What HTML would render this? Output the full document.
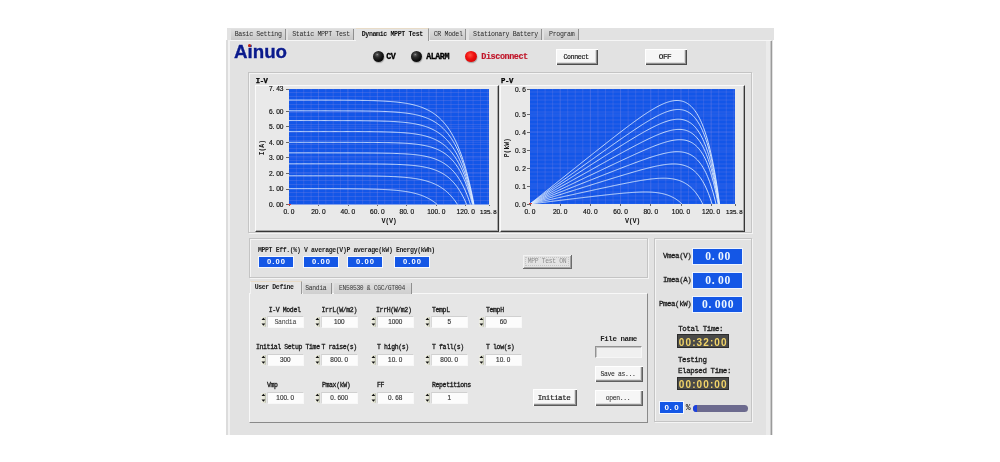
<!DOCTYPE html>
<html><head><meta charset="utf-8"><title>Ainuo Dynamic MPPT Test</title>
<style>
html,body{margin:0;padding:0;background:#fff;}
body{width:1000px;height:462px;position:relative;overflow:hidden;font-family:"Liberation Mono",monospace;}
#root{position:absolute;left:0;top:0;width:1000px;height:462px;overflow:hidden;filter:blur(0.45px);}
#root div{position:absolute;}
.n{font-family:"Liberation Sans",sans-serif !important;-webkit-text-stroke:0.18px currentColor;}
#root i{display:inline-block;font-style:normal;text-align:left;}
.t{white-space:nowrap;line-height:1.15;font-family:"Liberation Mono",monospace;}
.logo{font-family:"Liberation Sans",sans-serif;font-weight:bold;font-size:18px;color:#0b1b8c;-webkit-text-stroke:0.35px #0b1b8c;text-shadow:0 0 2px rgba(255,255,255,.9);line-height:1.15;letter-spacing:0px;white-space:nowrap;}
</style></head><body><div id="root">
<div class="" style="left:227px;top:28px;width:547px;height:12px;background:#e2e2e2;"></div>
<div class="" style="left:226px;top:40px;width:547px;height:395px;background:#e2e2e2;"></div>
<div class="" style="left:227px;top:40px;width:544px;height:1px;background:#f6f6f6;"></div>
<div class="" style="left:226px;top:40px;width:2px;height:395px;background:#dcdcdc;"></div>
<div class="" style="left:228px;top:40px;width:2px;height:395px;background:#f2f2f2;"></div>
<div class="" style="left:766px;top:41px;width:4px;height:394px;background:#ebebeb;"></div>
<div class="" style="left:770px;top:41px;width:1px;height:394px;background:#c8c8c8;"></div>
<div class="" style="left:771px;top:41px;width:1.2px;height:394px;background:#9a9a9a;"></div>
<div class="" style="left:230.5px;top:29px;width:55.30000000000001px;height:11px;background:linear-gradient(#dedede,#c8c8c8);border-right:1px solid #8f8f8f;box-sizing:border-box;"></div>
<div class="t" style="left:230.50px;top:31.34px;font-size:6.60px;letter-spacing:-0.360px;width:55.30000000000001px;text-align:center;color:#2c2c2c;">Basic Setting</div>
<div class="" style="left:288px;top:29px;width:66px;height:11px;background:linear-gradient(#dedede,#c8c8c8);border-right:1px solid #8f8f8f;box-sizing:border-box;"></div>
<div class="t" style="left:288.00px;top:31.34px;font-size:6.60px;letter-spacing:-0.360px;width:66px;text-align:center;color:#2c2c2c;">Static MPPT Test</div>
<div class="" style="left:356px;top:28px;width:72.60000000000002px;height:13px;background:#e2e2e2;border-top:1px solid #e9dcc8;border-right:1px solid #9a9a9a;box-sizing:border-box;"></div>
<div class="t" style="left:356.00px;top:30.64px;font-size:6.60px;letter-spacing:-0.360px;width:72.60000000000002px;text-align:center;color:#111;font-weight:bold;">Dynamic MPPT Test</div>
<div class="" style="left:430px;top:29px;width:36.30000000000001px;height:11px;background:linear-gradient(#dedede,#c8c8c8);border-right:1px solid #8f8f8f;box-sizing:border-box;"></div>
<div class="t" style="left:430.00px;top:31.34px;font-size:6.60px;letter-spacing:-0.360px;width:36.30000000000001px;text-align:center;color:#2c2c2c;">CR Model</div>
<div class="" style="left:468.6px;top:29px;width:73.79999999999995px;height:11px;background:linear-gradient(#dedede,#c8c8c8);border-right:1px solid #8f8f8f;box-sizing:border-box;"></div>
<div class="t" style="left:468.60px;top:31.34px;font-size:6.60px;letter-spacing:-0.360px;width:73.79999999999995px;text-align:center;color:#2c2c2c;">Stationary Battery</div>
<div class="" style="left:544px;top:29px;width:35.39999999999998px;height:11px;background:linear-gradient(#dedede,#c8c8c8);border-right:1px solid #8f8f8f;box-sizing:border-box;"></div>
<div class="t" style="left:544.00px;top:31.34px;font-size:6.60px;letter-spacing:-0.360px;width:35.39999999999998px;text-align:center;color:#2c2c2c;">Program</div>
<div class="logo" style="left:234px;top:42.2px;transform-origin:0 0;transform:scaleX(1.04);">Ainuo</div>
<div class="" style="left:248.3px;top:44.2px;width:3.2px;height:3.2px;background:#d02a10;border-radius:50%;"></div>
<div class="" style="left:373px;top:51px;width:11px;height:11px;border-radius:50%;background:radial-gradient(circle at 38% 33%, #b0b0b0 0%, #5a5a5a 9%, #2e2e2e 26%, #0c0c0c 62%);box-shadow:0.5px 1px 1px rgba(120,120,120,.6);"></div>
<div class="" style="left:411px;top:51px;width:11px;height:11px;border-radius:50%;background:radial-gradient(circle at 38% 33%, #b0b0b0 0%, #5a5a5a 9%, #2e2e2e 26%, #0c0c0c 62%);box-shadow:0.5px 1px 1px rgba(120,120,120,.6);"></div>
<div class="" style="left:465px;top:51px;width:12px;height:11px;border-radius:50%;background:radial-gradient(circle at 42% 38%, #ff5040 0%, #f01010 40%, #d80808 70%, #a01010 100%);box-shadow:0.5px 1px 1px rgba(120,120,120,.6);"></div>
<div class="t" style="left:386.20px;top:52.54px;font-size:8.36px;letter-spacing:-0.456px;font-weight:bold;color:#000;-webkit-text-stroke:0.3px #000;">CV</div>
<div class="t" style="left:426.20px;top:52.54px;font-size:8.36px;letter-spacing:-0.456px;font-weight:bold;color:#000;-webkit-text-stroke:0.3px #000;">ALARM</div>
<div class="t" style="left:481.30px;top:52.83px;font-size:8.53px;letter-spacing:-0.465px;font-weight:bold;color:#c0162a;-webkit-text-stroke:0.15px #c0162a;">Disconnect</div>
<div class="" style="left:556px;top:49px;width:42px;height:16px;background:#f6f6f6;border-top:1px solid #fff;border-left:1px solid #fff;box-sizing:border-box;"></div>
<div class="" style="left:595px;top:50px;width:1px;height:13px;background:#dcdcdc;"></div>
<div class="" style="left:557px;top:62px;width:39px;height:1px;background:#dcdcdc;"></div>
<div class="" style="left:596px;top:50px;width:1px;height:14px;background:#909090;"></div>
<div class="" style="left:557px;top:63px;width:40px;height:1px;background:#909090;"></div>
<div class="" style="left:597px;top:50px;width:1px;height:15px;background:#4c4c4c;"></div>
<div class="" style="left:557px;top:64px;width:41px;height:1px;background:#4c4c4c;"></div>
<div class="t" style="left:556.00px;top:53.89px;font-size:6.60px;letter-spacing:-0.360px;width:40px;text-align:center;color:#1a1a1a;-webkit-text-stroke:0.2px #1a1a1a;">Connect</div>
<div class="" style="left:645px;top:49px;width:42px;height:16px;background:#f6f6f6;border-top:1px solid #fff;border-left:1px solid #fff;box-sizing:border-box;"></div>
<div class="" style="left:684px;top:50px;width:1px;height:13px;background:#dcdcdc;"></div>
<div class="" style="left:646px;top:62px;width:39px;height:1px;background:#dcdcdc;"></div>
<div class="" style="left:685px;top:50px;width:1px;height:14px;background:#909090;"></div>
<div class="" style="left:646px;top:63px;width:40px;height:1px;background:#909090;"></div>
<div class="" style="left:686px;top:50px;width:1px;height:15px;background:#4c4c4c;"></div>
<div class="" style="left:646px;top:64px;width:41px;height:1px;background:#4c4c4c;"></div>
<div class="t" style="left:645.00px;top:53.26px;font-size:7.70px;letter-spacing:-0.420px;width:40px;text-align:center;color:#1a1a1a;-webkit-text-stroke:0.2px #1a1a1a;">OFF</div>
<div class="" style="left:248px;top:72px;width:504px;height:161px;background:#e2e2e2;border:1px solid #c4c4c4;box-shadow:inset 1px 1px 0 #f4f4f4, 1px 1px 0 #f4f4f4;box-sizing:border-box;"></div>
<div class="" style="left:255px;top:85px;width:244px;height:147px;background:#e9e9e9;border-top:1px solid #fafafa;border-left:1px solid #fafafa;border-right:1px solid #363636;border-bottom:1px solid #363636;box-shadow:inset -1px -1px 0 #a8a8a8;box-sizing:border-box;"></div>
<div class="" style="left:500px;top:85px;width:245px;height:147px;background:#e9e9e9;border-top:1px solid #fafafa;border-left:1px solid #fafafa;border-right:1px solid #363636;border-bottom:1px solid #363636;box-shadow:inset -1px -1px 0 #a8a8a8;box-sizing:border-box;"></div>
<div class="t" style="left:255.70px;top:76.90px;font-size:7.26px;letter-spacing:-0.396px;font-weight:bold;color:#000;-webkit-text-stroke:0.25px #000;">I-V</div>
<div class="t" style="left:501.00px;top:76.90px;font-size:7.26px;letter-spacing:-0.396px;font-weight:bold;color:#000;-webkit-text-stroke:0.25px #000;">P-V</div>
<svg style="position:absolute;left:289px;top:89px" width="200" height="115.5" viewBox="0 0 200 115.5"><rect width="200" height="115.5" fill="#1356e8"/><line x1="7.36" y1="0" x2="7.36" y2="115.5" stroke="#8c8ce0" stroke-opacity="0.34" stroke-width="0.7"/><line x1="14.73" y1="0" x2="14.73" y2="115.5" stroke="#8c8ce0" stroke-opacity="0.34" stroke-width="0.7"/><line x1="22.09" y1="0" x2="22.09" y2="115.5" stroke="#8c8ce0" stroke-opacity="0.34" stroke-width="0.7"/><line x1="29.46" y1="0" x2="29.46" y2="115.5" stroke="#8c8ce0" stroke-opacity="0.5" stroke-width="0.7"/><line x1="36.82" y1="0" x2="36.82" y2="115.5" stroke="#8c8ce0" stroke-opacity="0.34" stroke-width="0.7"/><line x1="44.18" y1="0" x2="44.18" y2="115.5" stroke="#8c8ce0" stroke-opacity="0.34" stroke-width="0.7"/><line x1="51.55" y1="0" x2="51.55" y2="115.5" stroke="#8c8ce0" stroke-opacity="0.34" stroke-width="0.7"/><line x1="58.91" y1="0" x2="58.91" y2="115.5" stroke="#8c8ce0" stroke-opacity="0.5" stroke-width="0.7"/><line x1="66.27" y1="0" x2="66.27" y2="115.5" stroke="#8c8ce0" stroke-opacity="0.34" stroke-width="0.7"/><line x1="73.64" y1="0" x2="73.64" y2="115.5" stroke="#8c8ce0" stroke-opacity="0.34" stroke-width="0.7"/><line x1="81.00" y1="0" x2="81.00" y2="115.5" stroke="#8c8ce0" stroke-opacity="0.34" stroke-width="0.7"/><line x1="88.37" y1="0" x2="88.37" y2="115.5" stroke="#8c8ce0" stroke-opacity="0.5" stroke-width="0.7"/><line x1="95.73" y1="0" x2="95.73" y2="115.5" stroke="#8c8ce0" stroke-opacity="0.34" stroke-width="0.7"/><line x1="103.09" y1="0" x2="103.09" y2="115.5" stroke="#8c8ce0" stroke-opacity="0.34" stroke-width="0.7"/><line x1="110.46" y1="0" x2="110.46" y2="115.5" stroke="#8c8ce0" stroke-opacity="0.34" stroke-width="0.7"/><line x1="117.82" y1="0" x2="117.82" y2="115.5" stroke="#8c8ce0" stroke-opacity="0.5" stroke-width="0.7"/><line x1="125.18" y1="0" x2="125.18" y2="115.5" stroke="#8c8ce0" stroke-opacity="0.34" stroke-width="0.7"/><line x1="132.55" y1="0" x2="132.55" y2="115.5" stroke="#8c8ce0" stroke-opacity="0.34" stroke-width="0.7"/><line x1="139.91" y1="0" x2="139.91" y2="115.5" stroke="#8c8ce0" stroke-opacity="0.34" stroke-width="0.7"/><line x1="147.28" y1="0" x2="147.28" y2="115.5" stroke="#8c8ce0" stroke-opacity="0.5" stroke-width="0.7"/><line x1="154.64" y1="0" x2="154.64" y2="115.5" stroke="#8c8ce0" stroke-opacity="0.34" stroke-width="0.7"/><line x1="162.00" y1="0" x2="162.00" y2="115.5" stroke="#8c8ce0" stroke-opacity="0.34" stroke-width="0.7"/><line x1="169.37" y1="0" x2="169.37" y2="115.5" stroke="#8c8ce0" stroke-opacity="0.34" stroke-width="0.7"/><line x1="176.73" y1="0" x2="176.73" y2="115.5" stroke="#8c8ce0" stroke-opacity="0.5" stroke-width="0.7"/><line x1="184.09" y1="0" x2="184.09" y2="115.5" stroke="#8c8ce0" stroke-opacity="0.34" stroke-width="0.7"/><line x1="191.46" y1="0" x2="191.46" y2="115.5" stroke="#8c8ce0" stroke-opacity="0.34" stroke-width="0.7"/><line x1="198.82" y1="0" x2="198.82" y2="115.5" stroke="#8c8ce0" stroke-opacity="0.34" stroke-width="0.7"/><line x1="0" y1="111.50" x2="200" y2="111.50" stroke="#8c8ce0" stroke-opacity="0.36" stroke-width="0.7"/><line x1="0" y1="107.50" x2="200" y2="107.50" stroke="#8c8ce0" stroke-opacity="0.36" stroke-width="0.7"/><line x1="0" y1="103.50" x2="200" y2="103.50" stroke="#8c8ce0" stroke-opacity="0.36" stroke-width="0.7"/><line x1="0" y1="99.50" x2="200" y2="99.50" stroke="#8c8ce0" stroke-opacity="0.36" stroke-width="0.7"/><line x1="0" y1="95.50" x2="200" y2="95.50" stroke="#8c8ce0" stroke-opacity="0.36" stroke-width="0.7"/><line x1="0" y1="91.50" x2="200" y2="91.50" stroke="#8c8ce0" stroke-opacity="0.36" stroke-width="0.7"/><line x1="0" y1="87.50" x2="200" y2="87.50" stroke="#8c8ce0" stroke-opacity="0.36" stroke-width="0.7"/><line x1="0" y1="83.50" x2="200" y2="83.50" stroke="#8c8ce0" stroke-opacity="0.36" stroke-width="0.7"/><line x1="0" y1="79.50" x2="200" y2="79.50" stroke="#8c8ce0" stroke-opacity="0.36" stroke-width="0.7"/><line x1="0" y1="75.50" x2="200" y2="75.50" stroke="#8c8ce0" stroke-opacity="0.36" stroke-width="0.7"/><line x1="0" y1="71.50" x2="200" y2="71.50" stroke="#8c8ce0" stroke-opacity="0.36" stroke-width="0.7"/><line x1="0" y1="67.50" x2="200" y2="67.50" stroke="#8c8ce0" stroke-opacity="0.36" stroke-width="0.7"/><line x1="0" y1="63.50" x2="200" y2="63.50" stroke="#8c8ce0" stroke-opacity="0.36" stroke-width="0.7"/><line x1="0" y1="59.50" x2="200" y2="59.50" stroke="#8c8ce0" stroke-opacity="0.36" stroke-width="0.7"/><line x1="0" y1="55.50" x2="200" y2="55.50" stroke="#8c8ce0" stroke-opacity="0.36" stroke-width="0.7"/><line x1="0" y1="51.50" x2="200" y2="51.50" stroke="#8c8ce0" stroke-opacity="0.36" stroke-width="0.7"/><line x1="0" y1="47.50" x2="200" y2="47.50" stroke="#8c8ce0" stroke-opacity="0.36" stroke-width="0.7"/><line x1="0" y1="43.50" x2="200" y2="43.50" stroke="#8c8ce0" stroke-opacity="0.36" stroke-width="0.7"/><line x1="0" y1="39.50" x2="200" y2="39.50" stroke="#8c8ce0" stroke-opacity="0.36" stroke-width="0.7"/><line x1="0" y1="35.50" x2="200" y2="35.50" stroke="#8c8ce0" stroke-opacity="0.36" stroke-width="0.7"/><line x1="0" y1="31.50" x2="200" y2="31.50" stroke="#8c8ce0" stroke-opacity="0.36" stroke-width="0.7"/><line x1="0" y1="27.50" x2="200" y2="27.50" stroke="#8c8ce0" stroke-opacity="0.36" stroke-width="0.7"/><line x1="0" y1="23.50" x2="200" y2="23.50" stroke="#8c8ce0" stroke-opacity="0.36" stroke-width="0.7"/><line x1="0" y1="19.50" x2="200" y2="19.50" stroke="#8c8ce0" stroke-opacity="0.36" stroke-width="0.7"/><line x1="0" y1="15.50" x2="200" y2="15.50" stroke="#8c8ce0" stroke-opacity="0.36" stroke-width="0.7"/><line x1="0" y1="11.50" x2="200" y2="11.50" stroke="#8c8ce0" stroke-opacity="0.36" stroke-width="0.7"/><line x1="0" y1="7.50" x2="200" y2="7.50" stroke="#8c8ce0" stroke-opacity="0.36" stroke-width="0.7"/><line x1="0" y1="3.50" x2="200" y2="3.50" stroke="#8c8ce0" stroke-opacity="0.36" stroke-width="0.7"/><line x1="0" y1="115.50" x2="200" y2="115.50" stroke="#b9b0ff" stroke-opacity="0.2" stroke-width="0.7"/><line x1="0" y1="99.95" x2="200" y2="99.95" stroke="#b9b0ff" stroke-opacity="0.2" stroke-width="0.7"/><line x1="0" y1="84.41" x2="200" y2="84.41" stroke="#b9b0ff" stroke-opacity="0.2" stroke-width="0.7"/><line x1="0" y1="68.86" x2="200" y2="68.86" stroke="#b9b0ff" stroke-opacity="0.2" stroke-width="0.7"/><line x1="0" y1="53.32" x2="200" y2="53.32" stroke="#b9b0ff" stroke-opacity="0.2" stroke-width="0.7"/><line x1="0" y1="37.77" x2="200" y2="37.77" stroke="#b9b0ff" stroke-opacity="0.2" stroke-width="0.7"/><line x1="0" y1="22.23" x2="200" y2="22.23" stroke="#b9b0ff" stroke-opacity="0.2" stroke-width="0.7"/><line x1="0" y1="0.00" x2="200" y2="0.00" stroke="#b9b0ff" stroke-opacity="0.2" stroke-width="0.7"/><path d="M0.00,11.04 L0.92,11.04 L1.85,11.04 L2.77,11.04 L3.70,11.04 L4.62,11.04 L5.55,11.04 L6.47,11.04 L7.40,11.04 L8.32,11.04 L9.25,11.04 L10.17,11.04 L11.10,11.04 L12.02,11.04 L12.95,11.04 L13.87,11.05 L14.80,11.05 L15.72,11.05 L16.65,11.05 L17.57,11.05 L18.50,11.05 L19.42,11.05 L20.35,11.05 L21.27,11.05 L22.20,11.05 L23.12,11.06 L24.05,11.06 L24.97,11.06 L25.90,11.06 L26.82,11.06 L27.75,11.06 L28.67,11.06 L29.60,11.07 L30.52,11.07 L31.45,11.07 L32.37,11.07 L33.30,11.07 L34.22,11.08 L35.15,11.08 L36.07,11.08 L37.00,11.08 L37.92,11.09 L38.85,11.09 L39.77,11.09 L40.70,11.10 L41.62,11.10 L42.54,11.10 L43.47,11.11 L44.39,11.11 L45.32,11.11 L46.24,11.12 L47.17,11.12 L48.09,11.13 L49.02,11.13 L49.94,11.14 L50.87,11.14 L51.79,11.15 L52.72,11.15 L53.64,11.16 L54.57,11.16 L55.49,11.17 L56.42,11.18 L57.34,11.19 L58.27,11.19 L59.19,11.20 L60.12,11.21 L61.04,11.22 L61.97,11.23 L62.89,11.24 L63.82,11.25 L64.74,11.26 L65.67,11.27 L66.59,11.28 L67.52,11.29 L68.44,11.30 L69.37,11.32 L70.29,11.33 L71.22,11.35 L72.14,11.36 L73.07,11.38 L73.99,11.39 L74.92,11.41 L75.84,11.43 L76.77,11.45 L77.69,11.47 L78.62,11.49 L79.54,11.51 L80.47,11.54 L81.39,11.56 L82.32,11.59 L83.24,11.61 L84.16,11.64 L85.09,11.67 L86.01,11.70 L86.94,11.74 L87.86,11.77 L88.79,11.81 L89.71,11.84 L90.64,11.88 L91.56,11.92 L92.49,11.97 L93.41,12.01 L94.34,12.06 L95.26,12.11 L96.19,12.16 L97.11,12.22 L98.04,12.27 L98.96,12.33 L99.89,12.40 L100.81,12.46 L101.74,12.53 L102.66,12.61 L103.59,12.68 L104.51,12.76 L105.44,12.85 L106.36,12.93 L107.29,13.02 L108.21,13.12 L109.14,13.22 L110.06,13.33 L110.99,13.44 L111.91,13.56 L112.84,13.68 L113.76,13.80 L114.69,13.94 L115.61,14.08 L116.54,14.23 L117.46,14.38 L118.39,14.54 L119.31,14.71 L120.24,14.89 L121.16,15.08 L122.09,15.27 L123.01,15.48 L123.94,15.69 L124.86,15.91 L125.78,16.15 L126.71,16.40 L127.63,16.66 L128.56,16.93 L129.48,17.21 L130.41,17.51 L131.33,17.82 L132.26,18.15 L133.18,18.50 L134.11,18.86 L135.03,19.23 L135.96,19.63 L136.88,20.04 L137.81,20.48 L138.73,20.93 L139.66,21.41 L140.58,21.91 L141.51,22.44 L142.43,22.99 L143.36,23.57 L144.28,24.17 L145.21,24.81 L146.13,25.47 L147.06,26.17 L147.98,26.90 L148.91,27.66 L149.83,28.46 L150.76,29.31 L151.68,30.19 L152.61,31.11 L153.53,32.08 L154.46,33.10 L155.38,34.16 L156.31,35.28 L157.23,36.45 L158.16,37.67 L159.08,38.96 L160.01,40.31 L160.93,41.72 L161.86,43.20 L162.78,44.75 L163.71,46.38 L164.63,48.08 L165.56,49.87 L166.48,51.74 L167.41,53.71 L168.33,55.77 L169.25,57.93 L170.18,60.19 L171.10,62.56 L172.03,65.05 L172.95,67.65 L173.88,70.38 L174.80,73.25 L175.73,76.25 L176.65,79.39 L177.58,82.69 L178.50,86.15 L179.43,89.77 L180.35,93.57 L181.28,97.56 L182.20,101.73 L183.13,106.11 L184.05,110.69 L184.98,115.50" fill="none" stroke="#e2f0ff" stroke-width="0.95" stroke-opacity="0.9"/><path d="M0.00,21.76 L0.92,21.76 L1.85,21.76 L2.77,21.76 L3.69,21.76 L4.62,21.76 L5.54,21.76 L6.46,21.76 L7.39,21.77 L8.31,21.77 L9.23,21.77 L10.16,21.77 L11.08,21.77 L12.00,21.77 L12.93,21.77 L13.85,21.77 L14.77,21.77 L15.70,21.77 L16.62,21.77 L17.54,21.77 L18.47,21.77 L19.39,21.77 L20.32,21.77 L21.24,21.77 L22.16,21.77 L23.09,21.77 L24.01,21.77 L24.93,21.77 L25.86,21.78 L26.78,21.78 L27.70,21.78 L28.63,21.78 L29.55,21.78 L30.47,21.78 L31.40,21.78 L32.32,21.78 L33.24,21.78 L34.17,21.78 L35.09,21.79 L36.01,21.79 L36.94,21.79 L37.86,21.79 L38.78,21.79 L39.71,21.79 L40.63,21.80 L41.55,21.80 L42.48,21.80 L43.40,21.80 L44.32,21.80 L45.25,21.81 L46.17,21.81 L47.09,21.81 L48.02,21.81 L48.94,21.82 L49.86,21.82 L50.79,21.82 L51.71,21.83 L52.63,21.83 L53.56,21.83 L54.48,21.84 L55.41,21.84 L56.33,21.84 L57.25,21.85 L58.18,21.85 L59.10,21.86 L60.02,21.86 L60.95,21.87 L61.87,21.87 L62.79,21.88 L63.72,21.89 L64.64,21.89 L65.56,21.90 L66.49,21.91 L67.41,21.91 L68.33,21.92 L69.26,21.93 L70.18,21.94 L71.10,21.95 L72.03,21.96 L72.95,21.97 L73.87,21.98 L74.80,21.99 L75.72,22.00 L76.64,22.02 L77.57,22.03 L78.49,22.04 L79.41,22.06 L80.34,22.07 L81.26,22.09 L82.18,22.11 L83.11,22.13 L84.03,22.14 L84.95,22.16 L85.88,22.19 L86.80,22.21 L87.72,22.23 L88.65,22.25 L89.57,22.28 L90.49,22.31 L91.42,22.34 L92.34,22.37 L93.27,22.40 L94.19,22.43 L95.11,22.46 L96.04,22.50 L96.96,22.54 L97.88,22.58 L98.81,22.62 L99.73,22.67 L100.65,22.71 L101.58,22.76 L102.50,22.81 L103.42,22.87 L104.35,22.93 L105.27,22.99 L106.19,23.05 L107.12,23.12 L108.04,23.19 L108.96,23.26 L109.89,23.34 L110.81,23.42 L111.73,23.51 L112.66,23.60 L113.58,23.69 L114.50,23.79 L115.43,23.90 L116.35,24.01 L117.27,24.12 L118.20,24.25 L119.12,24.37 L120.04,24.51 L120.97,24.65 L121.89,24.80 L122.81,24.96 L123.74,25.12 L124.66,25.30 L125.58,25.48 L126.51,25.67 L127.43,25.88 L128.35,26.09 L129.28,26.31 L130.20,26.55 L131.13,26.80 L132.05,27.06 L132.97,27.33 L133.90,27.62 L134.82,27.92 L135.74,28.24 L136.67,28.57 L137.59,28.93 L138.51,29.30 L139.44,29.69 L140.36,30.10 L141.28,30.53 L142.21,30.98 L143.13,31.46 L144.05,31.96 L144.98,32.49 L145.90,33.04 L146.82,33.62 L147.75,34.24 L148.67,34.88 L149.59,35.56 L150.52,36.28 L151.44,37.03 L152.36,37.82 L153.29,38.65 L154.21,39.52 L155.13,40.44 L156.06,41.40 L156.98,42.42 L157.90,43.49 L158.83,44.61 L159.75,45.79 L160.67,47.03 L161.60,48.34 L162.52,49.72 L163.44,51.16 L164.37,52.68 L165.29,54.28 L166.22,55.96 L167.14,57.73 L168.06,59.59 L168.99,61.55 L169.91,63.60 L170.83,65.77 L171.76,68.04 L172.68,70.43 L173.60,72.95 L174.53,75.60 L175.45,78.38 L176.37,81.31 L177.30,84.39 L178.22,87.63 L179.14,91.03 L180.07,94.61 L180.99,98.38 L181.91,102.34 L182.84,106.51 L183.76,110.89 L184.68,115.50" fill="none" stroke="#e2f0ff" stroke-width="0.95" stroke-opacity="0.9"/><path d="M0.00,31.56 L0.92,31.56 L1.84,31.56 L2.77,31.56 L3.69,31.56 L4.61,31.56 L5.53,31.56 L6.45,31.56 L7.38,31.56 L8.30,31.56 L9.22,31.56 L10.14,31.56 L11.06,31.56 L11.99,31.56 L12.91,31.56 L13.83,31.56 L14.75,31.56 L15.67,31.56 L16.59,31.56 L17.52,31.56 L18.44,31.56 L19.36,31.56 L20.28,31.56 L21.20,31.56 L22.13,31.56 L23.05,31.56 L23.97,31.57 L24.89,31.57 L25.81,31.57 L26.74,31.57 L27.66,31.57 L28.58,31.57 L29.50,31.57 L30.42,31.57 L31.35,31.57 L32.27,31.57 L33.19,31.57 L34.11,31.57 L35.03,31.58 L35.96,31.58 L36.88,31.58 L37.80,31.58 L38.72,31.58 L39.64,31.58 L40.57,31.58 L41.49,31.58 L42.41,31.59 L43.33,31.59 L44.25,31.59 L45.18,31.59 L46.10,31.59 L47.02,31.60 L47.94,31.60 L48.86,31.60 L49.78,31.60 L50.71,31.61 L51.63,31.61 L52.55,31.61 L53.47,31.61 L54.39,31.62 L55.32,31.62 L56.24,31.62 L57.16,31.63 L58.08,31.63 L59.00,31.64 L59.93,31.64 L60.85,31.64 L61.77,31.65 L62.69,31.65 L63.61,31.66 L64.54,31.66 L65.46,31.67 L66.38,31.68 L67.30,31.68 L68.22,31.69 L69.15,31.70 L70.07,31.70 L70.99,31.71 L71.91,31.72 L72.83,31.73 L73.76,31.74 L74.68,31.75 L75.60,31.76 L76.52,31.77 L77.44,31.78 L78.37,31.79 L79.29,31.80 L80.21,31.82 L81.13,31.83 L82.05,31.85 L82.97,31.86 L83.90,31.88 L84.82,31.89 L85.74,31.91 L86.66,31.93 L87.58,31.95 L88.51,31.97 L89.43,31.99 L90.35,32.02 L91.27,32.04 L92.19,32.07 L93.12,32.09 L94.04,32.12 L94.96,32.15 L95.88,32.18 L96.80,32.21 L97.73,32.25 L98.65,32.29 L99.57,32.32 L100.49,32.36 L101.41,32.41 L102.34,32.45 L103.26,32.50 L104.18,32.55 L105.10,32.60 L106.02,32.65 L106.95,32.71 L107.87,32.77 L108.79,32.84 L109.71,32.90 L110.63,32.97 L111.56,33.05 L112.48,33.13 L113.40,33.21 L114.32,33.30 L115.24,33.39 L116.16,33.48 L117.09,33.58 L118.01,33.69 L118.93,33.80 L119.85,33.92 L120.77,34.04 L121.70,34.17 L122.62,34.31 L123.54,34.45 L124.46,34.61 L125.38,34.77 L126.31,34.93 L127.23,35.11 L128.15,35.30 L129.07,35.49 L129.99,35.70 L130.92,35.92 L131.84,36.14 L132.76,36.38 L133.68,36.64 L134.60,36.90 L135.53,37.18 L136.45,37.48 L137.37,37.79 L138.29,38.11 L139.21,38.46 L140.14,38.82 L141.06,39.20 L141.98,39.60 L142.90,40.02 L143.82,40.46 L144.75,40.93 L145.67,41.42 L146.59,41.93 L147.51,42.48 L148.43,43.05 L149.35,43.65 L150.28,44.28 L151.20,44.95 L152.12,45.65 L153.04,46.38 L153.96,47.16 L154.89,47.98 L155.81,48.83 L156.73,49.74 L157.65,50.69 L158.57,51.69 L159.50,52.74 L160.42,53.85 L161.34,55.02 L162.26,56.25 L163.18,57.54 L164.11,58.90 L165.03,60.33 L165.95,61.83 L166.87,63.42 L167.79,65.08 L168.72,66.84 L169.64,68.68 L170.56,70.63 L171.48,72.67 L172.40,74.82 L173.33,77.08 L174.25,79.46 L175.17,81.97 L176.09,84.61 L177.01,87.38 L177.94,90.30 L178.86,93.38 L179.78,96.61 L180.70,100.01 L181.62,103.59 L182.54,107.36 L183.47,111.33 L184.39,115.50" fill="none" stroke="#e2f0ff" stroke-width="0.95" stroke-opacity="0.9"/><path d="M0.00,42.44 L0.92,42.44 L1.84,42.44 L2.76,42.44 L3.68,42.44 L4.60,42.44 L5.52,42.44 L6.44,42.44 L7.36,42.44 L8.28,42.44 L9.20,42.44 L10.13,42.44 L11.05,42.44 L11.97,42.44 L12.89,42.44 L13.81,42.44 L14.73,42.44 L15.65,42.44 L16.57,42.44 L17.49,42.44 L18.41,42.44 L19.33,42.44 L20.25,42.44 L21.17,42.44 L22.09,42.44 L23.01,42.44 L23.93,42.44 L24.85,42.44 L25.77,42.44 L26.69,42.44 L27.61,42.44 L28.53,42.45 L29.46,42.45 L30.38,42.45 L31.30,42.45 L32.22,42.45 L33.14,42.45 L34.06,42.45 L34.98,42.45 L35.90,42.45 L36.82,42.45 L37.74,42.45 L38.66,42.45 L39.58,42.45 L40.50,42.45 L41.42,42.45 L42.34,42.46 L43.26,42.46 L44.18,42.46 L45.10,42.46 L46.02,42.46 L46.94,42.46 L47.86,42.46 L48.78,42.46 L49.71,42.47 L50.63,42.47 L51.55,42.47 L52.47,42.47 L53.39,42.47 L54.31,42.48 L55.23,42.48 L56.15,42.48 L57.07,42.48 L57.99,42.48 L58.91,42.49 L59.83,42.49 L60.75,42.49 L61.67,42.50 L62.59,42.50 L63.51,42.50 L64.43,42.51 L65.35,42.51 L66.27,42.51 L67.19,42.52 L68.11,42.52 L69.04,42.53 L69.96,42.53 L70.88,42.54 L71.80,42.54 L72.72,42.55 L73.64,42.56 L74.56,42.56 L75.48,42.57 L76.40,42.58 L77.32,42.58 L78.24,42.59 L79.16,42.60 L80.08,42.61 L81.00,42.62 L81.92,42.63 L82.84,42.64 L83.76,42.65 L84.68,42.66 L85.60,42.68 L86.52,42.69 L87.44,42.70 L88.37,42.72 L89.29,42.73 L90.21,42.75 L91.13,42.77 L92.05,42.79 L92.97,42.80 L93.89,42.83 L94.81,42.85 L95.73,42.87 L96.65,42.89 L97.57,42.92 L98.49,42.94 L99.41,42.97 L100.33,43.00 L101.25,43.03 L102.17,43.07 L103.09,43.10 L104.01,43.14 L104.93,43.17 L105.85,43.21 L106.77,43.26 L107.70,43.30 L108.62,43.35 L109.54,43.40 L110.46,43.45 L111.38,43.51 L112.30,43.57 L113.22,43.63 L114.14,43.70 L115.06,43.76 L115.98,43.84 L116.90,43.91 L117.82,44.00 L118.74,44.08 L119.66,44.17 L120.58,44.27 L121.50,44.37 L122.42,44.47 L123.34,44.58 L124.26,44.70 L125.18,44.83 L126.10,44.96 L127.03,45.10 L127.95,45.24 L128.87,45.40 L129.79,45.56 L130.71,45.73 L131.63,45.91 L132.55,46.10 L133.47,46.30 L134.39,46.52 L135.31,46.74 L136.23,46.98 L137.15,47.23 L138.07,47.49 L138.99,47.77 L139.91,48.06 L140.83,48.37 L141.75,48.69 L142.67,49.04 L143.59,49.40 L144.51,49.78 L145.43,50.18 L146.35,50.61 L147.28,51.06 L148.20,51.53 L149.12,52.03 L150.04,52.55 L150.96,53.11 L151.88,53.70 L152.80,54.31 L153.72,54.97 L154.64,55.65 L155.56,56.38 L156.48,57.14 L157.40,57.95 L158.32,58.80 L159.24,59.70 L160.16,60.65 L161.08,61.65 L162.00,62.70 L162.92,63.81 L163.84,64.99 L164.76,66.23 L165.68,67.53 L166.61,68.91 L167.53,70.36 L168.45,71.89 L169.37,73.51 L170.29,75.22 L171.21,77.02 L172.13,78.91 L173.05,80.92 L173.97,83.03 L174.89,85.26 L175.81,87.61 L176.73,90.09 L177.65,92.70 L178.57,95.46 L179.49,98.37 L180.41,101.44 L181.33,104.68 L182.25,108.09 L183.17,111.70 L184.09,115.50" fill="none" stroke="#e2f0ff" stroke-width="0.95" stroke-opacity="0.9"/><path d="M0.00,53.32 L0.92,53.32 L1.84,53.32 L2.75,53.32 L3.67,53.32 L4.59,53.32 L5.51,53.32 L6.42,53.32 L7.34,53.32 L8.26,53.32 L9.18,53.32 L10.09,53.32 L11.01,53.32 L11.93,53.32 L12.85,53.32 L13.76,53.32 L14.68,53.32 L15.60,53.32 L16.52,53.32 L17.43,53.32 L18.35,53.32 L19.27,53.32 L20.19,53.32 L21.10,53.32 L22.02,53.32 L22.94,53.32 L23.86,53.32 L24.77,53.32 L25.69,53.32 L26.61,53.32 L27.53,53.32 L28.44,53.32 L29.36,53.32 L30.28,53.32 L31.20,53.32 L32.11,53.32 L33.03,53.32 L33.95,53.32 L34.87,53.33 L35.78,53.33 L36.70,53.33 L37.62,53.33 L38.54,53.33 L39.45,53.33 L40.37,53.33 L41.29,53.33 L42.21,53.33 L43.12,53.33 L44.04,53.33 L44.96,53.33 L45.88,53.33 L46.79,53.33 L47.71,53.33 L48.63,53.33 L49.55,53.33 L50.46,53.34 L51.38,53.34 L52.30,53.34 L53.22,53.34 L54.13,53.34 L55.05,53.34 L55.97,53.34 L56.89,53.34 L57.80,53.34 L58.72,53.35 L59.64,53.35 L60.56,53.35 L61.47,53.35 L62.39,53.35 L63.31,53.36 L64.23,53.36 L65.14,53.36 L66.06,53.36 L66.98,53.36 L67.90,53.37 L68.81,53.37 L69.73,53.37 L70.65,53.38 L71.57,53.38 L72.48,53.38 L73.40,53.39 L74.32,53.39 L75.24,53.40 L76.15,53.40 L77.07,53.40 L77.99,53.41 L78.91,53.41 L79.82,53.42 L80.74,53.43 L81.66,53.43 L82.58,53.44 L83.49,53.45 L84.41,53.45 L85.33,53.46 L86.25,53.47 L87.16,53.48 L88.08,53.49 L89.00,53.50 L89.92,53.51 L90.84,53.52 L91.75,53.53 L92.67,53.54 L93.59,53.56 L94.51,53.57 L95.42,53.58 L96.34,53.60 L97.26,53.62 L98.18,53.63 L99.09,53.65 L100.01,53.67 L100.93,53.69 L101.85,53.71 L102.76,53.74 L103.68,53.76 L104.60,53.79 L105.52,53.82 L106.43,53.84 L107.35,53.88 L108.27,53.91 L109.19,53.94 L110.10,53.98 L111.02,54.02 L111.94,54.06 L112.86,54.10 L113.77,54.15 L114.69,54.20 L115.61,54.25 L116.53,54.30 L117.44,54.36 L118.36,54.42 L119.28,54.48 L120.20,54.55 L121.11,54.62 L122.03,54.70 L122.95,54.78 L123.87,54.87 L124.78,54.96 L125.70,55.05 L126.62,55.15 L127.54,55.26 L128.45,55.37 L129.37,55.49 L130.29,55.62 L131.21,55.76 L132.12,55.90 L133.04,56.05 L133.96,56.21 L134.88,56.38 L135.79,56.56 L136.71,56.75 L137.63,56.95 L138.55,57.16 L139.46,57.38 L140.38,57.62 L141.30,57.87 L142.22,58.14 L143.13,58.42 L144.05,58.72 L144.97,59.04 L145.89,59.37 L146.80,59.72 L147.72,60.10 L148.64,60.50 L149.56,60.91 L150.47,61.36 L151.39,61.83 L152.31,62.33 L153.23,62.85 L154.14,63.41 L155.06,64.00 L155.98,64.63 L156.90,65.29 L157.81,65.99 L158.73,66.73 L159.65,67.51 L160.57,68.34 L161.48,69.22 L162.40,70.15 L163.32,71.13 L164.24,72.17 L165.15,73.28 L166.07,74.44 L166.99,75.68 L167.91,76.99 L168.82,78.37 L169.74,79.83 L170.66,81.38 L171.58,83.02 L172.49,84.76 L173.41,86.60 L174.33,88.55 L175.25,90.61 L176.16,92.79 L177.08,95.09 L178.00,97.54 L178.92,100.12 L179.84,102.86 L180.75,105.75 L181.67,108.82 L182.59,112.07 L183.51,115.50" fill="none" stroke="#e2f0ff" stroke-width="0.95" stroke-opacity="0.9"/><path d="M0.00,63.89 L0.91,63.89 L1.81,63.89 L2.72,63.89 L3.63,63.89 L4.54,63.89 L5.44,63.89 L6.35,63.89 L7.26,63.89 L8.16,63.89 L9.07,63.89 L9.98,63.89 L10.89,63.89 L11.79,63.89 L12.70,63.89 L13.61,63.89 L14.52,63.89 L15.42,63.89 L16.33,63.89 L17.24,63.89 L18.14,63.89 L19.05,63.89 L19.96,63.89 L20.87,63.89 L21.77,63.89 L22.68,63.89 L23.59,63.89 L24.49,63.89 L25.40,63.89 L26.31,63.89 L27.22,63.89 L28.12,63.89 L29.03,63.89 L29.94,63.89 L30.85,63.90 L31.75,63.90 L32.66,63.90 L33.57,63.90 L34.47,63.90 L35.38,63.90 L36.29,63.90 L37.20,63.90 L38.10,63.90 L39.01,63.90 L39.92,63.90 L40.82,63.90 L41.73,63.90 L42.64,63.90 L43.55,63.90 L44.45,63.90 L45.36,63.90 L46.27,63.90 L47.18,63.90 L48.08,63.91 L48.99,63.91 L49.90,63.91 L50.80,63.91 L51.71,63.91 L52.62,63.91 L53.53,63.91 L54.43,63.91 L55.34,63.91 L56.25,63.92 L57.15,63.92 L58.06,63.92 L58.97,63.92 L59.88,63.92 L60.78,63.92 L61.69,63.93 L62.60,63.93 L63.51,63.93 L64.41,63.93 L65.32,63.94 L66.23,63.94 L67.13,63.94 L68.04,63.94 L68.95,63.95 L69.86,63.95 L70.76,63.95 L71.67,63.96 L72.58,63.96 L73.48,63.97 L74.39,63.97 L75.30,63.97 L76.21,63.98 L77.11,63.98 L78.02,63.99 L78.93,63.99 L79.84,64.00 L80.74,64.01 L81.65,64.01 L82.56,64.02 L83.46,64.03 L84.37,64.04 L85.28,64.04 L86.19,64.05 L87.09,64.06 L88.00,64.07 L88.91,64.08 L89.81,64.09 L90.72,64.10 L91.63,64.12 L92.54,64.13 L93.44,64.14 L94.35,64.16 L95.26,64.17 L96.16,64.19 L97.07,64.21 L97.98,64.22 L98.89,64.24 L99.79,64.26 L100.70,64.28 L101.61,64.30 L102.52,64.33 L103.42,64.35 L104.33,64.38 L105.24,64.41 L106.14,64.44 L107.05,64.47 L107.96,64.50 L108.87,64.53 L109.77,64.57 L110.68,64.61 L111.59,64.65 L112.49,64.69 L113.40,64.74 L114.31,64.78 L115.22,64.83 L116.12,64.89 L117.03,64.94 L117.94,65.00 L118.85,65.07 L119.75,65.13 L120.66,65.20 L121.57,65.28 L122.47,65.35 L123.38,65.44 L124.29,65.52 L125.20,65.62 L126.10,65.71 L127.01,65.82 L127.92,65.92 L128.82,66.04 L129.73,66.16 L130.64,66.29 L131.55,66.42 L132.45,66.57 L133.36,66.72 L134.27,66.88 L135.18,67.04 L136.08,67.22 L136.99,67.41 L137.90,67.61 L138.80,67.82 L139.71,68.04 L140.62,68.27 L141.53,68.52 L142.43,68.78 L143.34,69.05 L144.25,69.35 L145.15,69.65 L146.06,69.98 L146.97,70.32 L147.88,70.68 L148.78,71.07 L149.69,71.47 L150.60,71.90 L151.51,72.35 L152.41,72.82 L153.32,73.33 L154.23,73.86 L155.13,74.42 L156.04,75.01 L156.95,75.64 L157.86,76.30 L158.76,77.00 L159.67,77.74 L160.58,78.52 L161.48,79.35 L162.39,80.22 L163.30,81.14 L164.21,82.11 L165.11,83.13 L166.02,84.22 L166.93,85.36 L167.84,86.57 L168.74,87.85 L169.65,89.20 L170.56,90.63 L171.46,92.13 L172.37,93.72 L173.28,95.41 L174.19,97.18 L175.09,99.06 L176.00,101.04 L176.91,103.13 L177.81,105.34 L178.72,107.68 L179.63,110.14 L180.54,112.75 L181.44,115.50" fill="none" stroke="#e2f0ff" stroke-width="0.95" stroke-opacity="0.9"/><path d="M0.00,74.77 L0.89,74.77 L1.78,74.77 L2.66,74.77 L3.55,74.77 L4.44,74.77 L5.33,74.77 L6.22,74.77 L7.10,74.77 L7.99,74.77 L8.88,74.77 L9.77,74.77 L10.66,74.77 L11.54,74.77 L12.43,74.77 L13.32,74.77 L14.21,74.77 L15.10,74.77 L15.99,74.77 L16.87,74.77 L17.76,74.77 L18.65,74.77 L19.54,74.77 L20.43,74.77 L21.31,74.77 L22.20,74.77 L23.09,74.77 L23.98,74.78 L24.87,74.78 L25.75,74.78 L26.64,74.78 L27.53,74.78 L28.42,74.78 L29.31,74.78 L30.19,74.78 L31.08,74.78 L31.97,74.78 L32.86,74.78 L33.75,74.78 L34.63,74.78 L35.52,74.78 L36.41,74.78 L37.30,74.78 L38.19,74.78 L39.08,74.78 L39.96,74.78 L40.85,74.78 L41.74,74.78 L42.63,74.78 L43.52,74.78 L44.40,74.79 L45.29,74.79 L46.18,74.79 L47.07,74.79 L47.96,74.79 L48.84,74.79 L49.73,74.79 L50.62,74.79 L51.51,74.79 L52.40,74.79 L53.28,74.80 L54.17,74.80 L55.06,74.80 L55.95,74.80 L56.84,74.80 L57.72,74.80 L58.61,74.80 L59.50,74.81 L60.39,74.81 L61.28,74.81 L62.16,74.81 L63.05,74.81 L63.94,74.82 L64.83,74.82 L65.72,74.82 L66.61,74.83 L67.49,74.83 L68.38,74.83 L69.27,74.83 L70.16,74.84 L71.05,74.84 L71.93,74.85 L72.82,74.85 L73.71,74.85 L74.60,74.86 L75.49,74.86 L76.37,74.87 L77.26,74.87 L78.15,74.88 L79.04,74.88 L79.93,74.89 L80.81,74.90 L81.70,74.90 L82.59,74.91 L83.48,74.92 L84.37,74.93 L85.25,74.94 L86.14,74.94 L87.03,74.95 L87.92,74.96 L88.81,74.97 L89.70,74.99 L90.58,75.00 L91.47,75.01 L92.36,75.02 L93.25,75.04 L94.14,75.05 L95.02,75.07 L95.91,75.08 L96.80,75.10 L97.69,75.12 L98.58,75.14 L99.46,75.16 L100.35,75.18 L101.24,75.20 L102.13,75.22 L103.02,75.25 L103.90,75.27 L104.79,75.30 L105.68,75.33 L106.57,75.36 L107.46,75.39 L108.34,75.42 L109.23,75.46 L110.12,75.50 L111.01,75.54 L111.90,75.58 L112.78,75.62 L113.67,75.67 L114.56,75.72 L115.45,75.77 L116.34,75.82 L117.23,75.88 L118.11,75.94 L119.00,76.01 L119.89,76.07 L120.78,76.14 L121.67,76.22 L122.55,76.30 L123.44,76.38 L124.33,76.47 L125.22,76.56 L126.11,76.66 L126.99,76.76 L127.88,76.87 L128.77,76.98 L129.66,77.10 L130.55,77.23 L131.43,77.36 L132.32,77.50 L133.21,77.65 L134.10,77.81 L134.99,77.98 L135.87,78.15 L136.76,78.33 L137.65,78.53 L138.54,78.73 L139.43,78.95 L140.32,79.17 L141.20,79.41 L142.09,79.67 L142.98,79.93 L143.87,80.21 L144.76,80.51 L145.64,80.82 L146.53,81.15 L147.42,81.50 L148.31,81.86 L149.20,82.25 L150.08,82.66 L150.97,83.08 L151.86,83.54 L152.75,84.01 L153.64,84.52 L154.52,85.05 L155.41,85.61 L156.30,86.19 L157.19,86.82 L158.08,87.47 L158.96,88.16 L159.85,88.89 L160.74,89.66 L161.63,90.47 L162.52,91.32 L163.41,92.22 L164.29,93.17 L165.18,94.17 L166.07,95.23 L166.96,96.34 L167.85,97.51 L168.73,98.75 L169.62,100.06 L170.51,101.43 L171.40,102.88 L172.29,104.41 L173.17,106.02 L174.06,107.72 L174.95,109.52 L175.84,111.41 L176.73,113.40 L177.61,115.50" fill="none" stroke="#e2f0ff" stroke-width="0.95" stroke-opacity="0.9"/><path d="M0.00,86.74 L0.84,86.74 L1.68,86.74 L2.53,86.74 L3.37,86.74 L4.21,86.74 L5.05,86.74 L5.90,86.74 L6.74,86.74 L7.58,86.74 L8.42,86.74 L9.27,86.74 L10.11,86.74 L10.95,86.74 L11.79,86.74 L12.64,86.74 L13.48,86.74 L14.32,86.74 L15.16,86.75 L16.01,86.75 L16.85,86.75 L17.69,86.75 L18.53,86.75 L19.38,86.75 L20.22,86.75 L21.06,86.75 L21.90,86.75 L22.75,86.75 L23.59,86.75 L24.43,86.75 L25.27,86.75 L26.11,86.75 L26.96,86.75 L27.80,86.75 L28.64,86.75 L29.48,86.75 L30.33,86.75 L31.17,86.75 L32.01,86.76 L32.85,86.76 L33.70,86.76 L34.54,86.76 L35.38,86.76 L36.22,86.76 L37.07,86.76 L37.91,86.76 L38.75,86.76 L39.59,86.76 L40.44,86.76 L41.28,86.77 L42.12,86.77 L42.96,86.77 L43.81,86.77 L44.65,86.77 L45.49,86.77 L46.33,86.77 L47.18,86.78 L48.02,86.78 L48.86,86.78 L49.70,86.78 L50.54,86.78 L51.39,86.79 L52.23,86.79 L53.07,86.79 L53.91,86.79 L54.76,86.80 L55.60,86.80 L56.44,86.80 L57.28,86.80 L58.13,86.81 L58.97,86.81 L59.81,86.81 L60.65,86.82 L61.50,86.82 L62.34,86.82 L63.18,86.83 L64.02,86.83 L64.87,86.84 L65.71,86.84 L66.55,86.85 L67.39,86.85 L68.24,86.86 L69.08,86.86 L69.92,86.87 L70.76,86.87 L71.61,86.88 L72.45,86.89 L73.29,86.89 L74.13,86.90 L74.97,86.91 L75.82,86.92 L76.66,86.93 L77.50,86.94 L78.34,86.94 L79.19,86.95 L80.03,86.96 L80.87,86.98 L81.71,86.99 L82.56,87.00 L83.40,87.01 L84.24,87.02 L85.08,87.04 L85.93,87.05 L86.77,87.07 L87.61,87.08 L88.45,87.10 L89.30,87.11 L90.14,87.13 L90.98,87.15 L91.82,87.17 L92.67,87.19 L93.51,87.21 L94.35,87.23 L95.19,87.26 L96.04,87.28 L96.88,87.31 L97.72,87.33 L98.56,87.36 L99.41,87.39 L100.25,87.42 L101.09,87.45 L101.93,87.49 L102.77,87.52 L103.62,87.56 L104.46,87.60 L105.30,87.64 L106.14,87.68 L106.99,87.73 L107.83,87.77 L108.67,87.82 L109.51,87.87 L110.36,87.93 L111.20,87.98 L112.04,88.04 L112.88,88.10 L113.73,88.17 L114.57,88.24 L115.41,88.31 L116.25,88.38 L117.10,88.46 L117.94,88.54 L118.78,88.63 L119.62,88.71 L120.47,88.81 L121.31,88.91 L122.15,89.01 L122.99,89.12 L123.84,89.23 L124.68,89.35 L125.52,89.47 L126.36,89.60 L127.20,89.73 L128.05,89.87 L128.89,90.02 L129.73,90.18 L130.57,90.34 L131.42,90.51 L132.26,90.69 L133.10,90.88 L133.94,91.07 L134.79,91.28 L135.63,91.49 L136.47,91.71 L137.31,91.95 L138.16,92.20 L139.00,92.45 L139.84,92.72 L140.68,93.01 L141.53,93.30 L142.37,93.61 L143.21,93.94 L144.05,94.28 L144.90,94.63 L145.74,95.01 L146.58,95.40 L147.42,95.81 L148.27,96.23 L149.11,96.68 L149.95,97.15 L150.79,97.65 L151.63,98.16 L152.48,98.70 L153.32,99.27 L154.16,99.86 L155.00,100.48 L155.85,101.13 L156.69,101.81 L157.53,102.52 L158.37,103.27 L159.22,104.05 L160.06,104.86 L160.90,105.72 L161.74,106.62 L162.59,107.56 L163.43,108.54 L164.27,109.57 L165.11,110.65 L165.96,111.78 L166.80,112.96 L167.64,114.20 L168.48,115.50" fill="none" stroke="#e2f0ff" stroke-width="0.95" stroke-opacity="0.9"/><path d="M0.00,99.64 L0.74,99.64 L1.48,99.64 L2.22,99.64 L2.97,99.64 L3.71,99.65 L4.45,99.65 L5.19,99.65 L5.93,99.65 L6.67,99.65 L7.42,99.65 L8.16,99.65 L8.90,99.65 L9.64,99.65 L10.38,99.65 L11.12,99.65 L11.86,99.65 L12.61,99.65 L13.35,99.65 L14.09,99.65 L14.83,99.65 L15.57,99.65 L16.31,99.65 L17.06,99.65 L17.80,99.65 L18.54,99.65 L19.28,99.65 L20.02,99.65 L20.76,99.65 L21.50,99.66 L22.25,99.66 L22.99,99.66 L23.73,99.66 L24.47,99.66 L25.21,99.66 L25.95,99.66 L26.70,99.66 L27.44,99.66 L28.18,99.66 L28.92,99.66 L29.66,99.66 L30.40,99.67 L31.14,99.67 L31.89,99.67 L32.63,99.67 L33.37,99.67 L34.11,99.67 L34.85,99.67 L35.59,99.67 L36.34,99.68 L37.08,99.68 L37.82,99.68 L38.56,99.68 L39.30,99.68 L40.04,99.68 L40.78,99.69 L41.53,99.69 L42.27,99.69 L43.01,99.69 L43.75,99.69 L44.49,99.70 L45.23,99.70 L45.97,99.70 L46.72,99.70 L47.46,99.71 L48.20,99.71 L48.94,99.71 L49.68,99.71 L50.42,99.72 L51.17,99.72 L51.91,99.72 L52.65,99.73 L53.39,99.73 L54.13,99.74 L54.87,99.74 L55.61,99.74 L56.36,99.75 L57.10,99.75 L57.84,99.76 L58.58,99.76 L59.32,99.77 L60.06,99.77 L60.81,99.78 L61.55,99.78 L62.29,99.79 L63.03,99.80 L63.77,99.80 L64.51,99.81 L65.25,99.82 L66.00,99.82 L66.74,99.83 L67.48,99.84 L68.22,99.85 L68.96,99.85 L69.70,99.86 L70.45,99.87 L71.19,99.88 L71.93,99.89 L72.67,99.90 L73.41,99.91 L74.15,99.92 L74.89,99.94 L75.64,99.95 L76.38,99.96 L77.12,99.97 L77.86,99.99 L78.60,100.00 L79.34,100.02 L80.09,100.03 L80.83,100.05 L81.57,100.07 L82.31,100.08 L83.05,100.10 L83.79,100.12 L84.53,100.14 L85.28,100.16 L86.02,100.18 L86.76,100.20 L87.50,100.23 L88.24,100.25 L88.98,100.28 L89.73,100.30 L90.47,100.33 L91.21,100.36 L91.95,100.39 L92.69,100.42 L93.43,100.45 L94.17,100.48 L94.92,100.52 L95.66,100.55 L96.40,100.59 L97.14,100.63 L97.88,100.67 L98.62,100.71 L99.37,100.76 L100.11,100.80 L100.85,100.85 L101.59,100.90 L102.33,100.95 L103.07,101.01 L103.81,101.06 L104.56,101.12 L105.30,101.18 L106.04,101.24 L106.78,101.31 L107.52,101.38 L108.26,101.45 L109.01,101.52 L109.75,101.60 L110.49,101.68 L111.23,101.77 L111.97,101.85 L112.71,101.94 L113.45,102.04 L114.20,102.14 L114.94,102.24 L115.68,102.35 L116.42,102.46 L117.16,102.57 L117.90,102.69 L118.65,102.82 L119.39,102.95 L120.13,103.08 L120.87,103.23 L121.61,103.37 L122.35,103.53 L123.09,103.69 L123.84,103.85 L124.58,104.02 L125.32,104.20 L126.06,104.39 L126.80,104.59 L127.54,104.79 L128.28,105.00 L129.03,105.22 L129.77,105.45 L130.51,105.69 L131.25,105.93 L131.99,106.19 L132.73,106.46 L133.48,106.74 L134.22,107.03 L134.96,107.33 L135.70,107.65 L136.44,107.98 L137.18,108.32 L137.92,108.68 L138.67,109.05 L139.41,109.43 L140.15,109.83 L140.89,110.25 L141.63,110.69 L142.37,111.14 L143.12,111.61 L143.86,112.10 L144.60,112.61 L145.34,113.15 L146.08,113.70 L146.82,114.28 L147.56,114.88 L148.31,115.50" fill="none" stroke="#e2f0ff" stroke-width="0.95" stroke-opacity="0.9"/></svg>
<div class="t n" style="left:257.00px;top:200.80px;font-size:6.60px;width:26.5px;text-align:right;color:#111;">0<i style="width:3.6px">.</i>00</div>
<div class="" style="left:286.4px;top:204.1px;width:2.6px;height:0.8px;background:#666;"></div>
<div class="t n" style="left:257.00px;top:185.25px;font-size:6.60px;width:26.5px;text-align:right;color:#111;">1<i style="width:3.6px">.</i>00</div>
<div class="" style="left:286.4px;top:188.5549125168237px;width:2.6px;height:0.8px;background:#666;"></div>
<div class="t n" style="left:257.00px;top:169.71px;font-size:6.60px;width:26.5px;text-align:right;color:#111;">2<i style="width:3.6px">.</i>00</div>
<div class="" style="left:286.4px;top:173.00982503364736px;width:2.6px;height:0.8px;background:#666;"></div>
<div class="t n" style="left:257.00px;top:154.16px;font-size:6.60px;width:26.5px;text-align:right;color:#111;">3<i style="width:3.6px">.</i>00</div>
<div class="" style="left:286.4px;top:157.46473755047106px;width:2.6px;height:0.8px;background:#666;"></div>
<div class="t n" style="left:257.00px;top:138.62px;font-size:6.60px;width:26.5px;text-align:right;color:#111;">4<i style="width:3.6px">.</i>00</div>
<div class="" style="left:286.4px;top:141.91965006729473px;width:2.6px;height:0.8px;background:#666;"></div>
<div class="t n" style="left:257.00px;top:123.07px;font-size:6.60px;width:26.5px;text-align:right;color:#111;">5<i style="width:3.6px">.</i>00</div>
<div class="" style="left:286.4px;top:126.37456258411842px;width:2.6px;height:0.8px;background:#666;"></div>
<div class="t n" style="left:257.00px;top:107.53px;font-size:6.60px;width:26.5px;text-align:right;color:#111;">6<i style="width:3.6px">.</i>00</div>
<div class="" style="left:286.4px;top:110.82947510094212px;width:2.6px;height:0.8px;background:#666;"></div>
<div class="t n" style="left:257.00px;top:85.30px;font-size:6.60px;width:26.5px;text-align:right;color:#111;">7<i style="width:3.6px">.</i>43</div>
<div class="" style="left:286.4px;top:88.6px;width:2.6px;height:0.8px;background:#666;"></div>
<div class="t n" style="left:274.00px;top:208.10px;font-size:6.60px;width:30px;text-align:center;color:#111;">0<i style="width:3.6px">.</i>0</div>
<div class="" style="left:288.6px;top:204.5px;width:0.8px;height:1.8px;background:#666;"></div>
<div class="t n" style="left:303.46px;top:208.10px;font-size:6.60px;width:30px;text-align:center;color:#111;">20<i style="width:3.6px">.</i>0</div>
<div class="" style="left:318.0550810014728px;top:204.5px;width:0.8px;height:1.8px;background:#666;"></div>
<div class="t n" style="left:332.91px;top:208.10px;font-size:6.60px;width:30px;text-align:center;color:#111;">40<i style="width:3.6px">.</i>0</div>
<div class="" style="left:347.51016200294555px;top:204.5px;width:0.8px;height:1.8px;background:#666;"></div>
<div class="t n" style="left:362.37px;top:208.10px;font-size:6.60px;width:30px;text-align:center;color:#111;">60<i style="width:3.6px">.</i>0</div>
<div class="" style="left:376.9652430044183px;top:204.5px;width:0.8px;height:1.8px;background:#666;"></div>
<div class="t n" style="left:391.82px;top:208.10px;font-size:6.60px;width:30px;text-align:center;color:#111;">80<i style="width:3.6px">.</i>0</div>
<div class="" style="left:406.420324005891px;top:204.5px;width:0.8px;height:1.8px;background:#666;"></div>
<div class="t n" style="left:421.28px;top:208.10px;font-size:6.60px;width:30px;text-align:center;color:#111;">100<i style="width:3.6px">.</i>0</div>
<div class="" style="left:435.8754050073638px;top:204.5px;width:0.8px;height:1.8px;background:#666;"></div>
<div class="t n" style="left:450.73px;top:208.10px;font-size:6.60px;width:30px;text-align:center;color:#111;">120<i style="width:3.6px">.</i>0</div>
<div class="" style="left:465.33048600883654px;top:204.5px;width:0.8px;height:1.8px;background:#666;"></div>
<div class="t n" style="left:473.40px;top:208.30px;font-size:6.10px;width:30px;text-align:center;color:#111;">135<i style="width:3.0px">.</i>8</div>
<div class="" style="left:488.6px;top:204.5px;width:0.8px;height:1.8px;background:#666;"></div>
<div class="t" style="left:374.00px;top:217.73px;font-size:6.82px;letter-spacing:-0.372px;width:30px;text-align:center;color:#111;font-weight:bold;">V(V)</div>
<div class="t" style="left:253px;top:144.25px;width:20px;text-align:center;font-size:6.4px;color:#111;font-weight:bold;transform:rotate(-90deg);">I(A)</div>
<div class="" style="left:287.8px;top:203.6px;width:3px;height:1.0px;background:#e04040;"></div>
<svg style="position:absolute;left:530px;top:89.3px" width="205" height="115.00000000000001" viewBox="0 0 205 115.00000000000001"><rect width="205" height="115.00000000000001" fill="#1356e8"/><line x1="7.55" y1="0" x2="7.55" y2="115.00000000000001" stroke="#8c8ce0" stroke-opacity="0.34" stroke-width="0.7"/><line x1="15.10" y1="0" x2="15.10" y2="115.00000000000001" stroke="#8c8ce0" stroke-opacity="0.34" stroke-width="0.7"/><line x1="22.64" y1="0" x2="22.64" y2="115.00000000000001" stroke="#8c8ce0" stroke-opacity="0.34" stroke-width="0.7"/><line x1="30.19" y1="0" x2="30.19" y2="115.00000000000001" stroke="#8c8ce0" stroke-opacity="0.5" stroke-width="0.7"/><line x1="37.74" y1="0" x2="37.74" y2="115.00000000000001" stroke="#8c8ce0" stroke-opacity="0.34" stroke-width="0.7"/><line x1="45.29" y1="0" x2="45.29" y2="115.00000000000001" stroke="#8c8ce0" stroke-opacity="0.34" stroke-width="0.7"/><line x1="52.84" y1="0" x2="52.84" y2="115.00000000000001" stroke="#8c8ce0" stroke-opacity="0.34" stroke-width="0.7"/><line x1="60.38" y1="0" x2="60.38" y2="115.00000000000001" stroke="#8c8ce0" stroke-opacity="0.5" stroke-width="0.7"/><line x1="67.93" y1="0" x2="67.93" y2="115.00000000000001" stroke="#8c8ce0" stroke-opacity="0.34" stroke-width="0.7"/><line x1="75.48" y1="0" x2="75.48" y2="115.00000000000001" stroke="#8c8ce0" stroke-opacity="0.34" stroke-width="0.7"/><line x1="83.03" y1="0" x2="83.03" y2="115.00000000000001" stroke="#8c8ce0" stroke-opacity="0.34" stroke-width="0.7"/><line x1="90.57" y1="0" x2="90.57" y2="115.00000000000001" stroke="#8c8ce0" stroke-opacity="0.5" stroke-width="0.7"/><line x1="98.12" y1="0" x2="98.12" y2="115.00000000000001" stroke="#8c8ce0" stroke-opacity="0.34" stroke-width="0.7"/><line x1="105.67" y1="0" x2="105.67" y2="115.00000000000001" stroke="#8c8ce0" stroke-opacity="0.34" stroke-width="0.7"/><line x1="113.22" y1="0" x2="113.22" y2="115.00000000000001" stroke="#8c8ce0" stroke-opacity="0.34" stroke-width="0.7"/><line x1="120.77" y1="0" x2="120.77" y2="115.00000000000001" stroke="#8c8ce0" stroke-opacity="0.5" stroke-width="0.7"/><line x1="128.31" y1="0" x2="128.31" y2="115.00000000000001" stroke="#8c8ce0" stroke-opacity="0.34" stroke-width="0.7"/><line x1="135.86" y1="0" x2="135.86" y2="115.00000000000001" stroke="#8c8ce0" stroke-opacity="0.34" stroke-width="0.7"/><line x1="143.41" y1="0" x2="143.41" y2="115.00000000000001" stroke="#8c8ce0" stroke-opacity="0.34" stroke-width="0.7"/><line x1="150.96" y1="0" x2="150.96" y2="115.00000000000001" stroke="#8c8ce0" stroke-opacity="0.5" stroke-width="0.7"/><line x1="158.51" y1="0" x2="158.51" y2="115.00000000000001" stroke="#8c8ce0" stroke-opacity="0.34" stroke-width="0.7"/><line x1="166.05" y1="0" x2="166.05" y2="115.00000000000001" stroke="#8c8ce0" stroke-opacity="0.34" stroke-width="0.7"/><line x1="173.60" y1="0" x2="173.60" y2="115.00000000000001" stroke="#8c8ce0" stroke-opacity="0.34" stroke-width="0.7"/><line x1="181.15" y1="0" x2="181.15" y2="115.00000000000001" stroke="#8c8ce0" stroke-opacity="0.5" stroke-width="0.7"/><line x1="188.70" y1="0" x2="188.70" y2="115.00000000000001" stroke="#8c8ce0" stroke-opacity="0.34" stroke-width="0.7"/><line x1="196.24" y1="0" x2="196.24" y2="115.00000000000001" stroke="#8c8ce0" stroke-opacity="0.34" stroke-width="0.7"/><line x1="203.79" y1="0" x2="203.79" y2="115.00000000000001" stroke="#8c8ce0" stroke-opacity="0.34" stroke-width="0.7"/><line x1="0" y1="111.00" x2="205" y2="111.00" stroke="#8c8ce0" stroke-opacity="0.36" stroke-width="0.7"/><line x1="0" y1="107.00" x2="205" y2="107.00" stroke="#8c8ce0" stroke-opacity="0.36" stroke-width="0.7"/><line x1="0" y1="103.00" x2="205" y2="103.00" stroke="#8c8ce0" stroke-opacity="0.36" stroke-width="0.7"/><line x1="0" y1="99.00" x2="205" y2="99.00" stroke="#8c8ce0" stroke-opacity="0.36" stroke-width="0.7"/><line x1="0" y1="95.00" x2="205" y2="95.00" stroke="#8c8ce0" stroke-opacity="0.36" stroke-width="0.7"/><line x1="0" y1="91.00" x2="205" y2="91.00" stroke="#8c8ce0" stroke-opacity="0.36" stroke-width="0.7"/><line x1="0" y1="87.00" x2="205" y2="87.00" stroke="#8c8ce0" stroke-opacity="0.36" stroke-width="0.7"/><line x1="0" y1="83.00" x2="205" y2="83.00" stroke="#8c8ce0" stroke-opacity="0.36" stroke-width="0.7"/><line x1="0" y1="79.00" x2="205" y2="79.00" stroke="#8c8ce0" stroke-opacity="0.36" stroke-width="0.7"/><line x1="0" y1="75.00" x2="205" y2="75.00" stroke="#8c8ce0" stroke-opacity="0.36" stroke-width="0.7"/><line x1="0" y1="71.00" x2="205" y2="71.00" stroke="#8c8ce0" stroke-opacity="0.36" stroke-width="0.7"/><line x1="0" y1="67.00" x2="205" y2="67.00" stroke="#8c8ce0" stroke-opacity="0.36" stroke-width="0.7"/><line x1="0" y1="63.00" x2="205" y2="63.00" stroke="#8c8ce0" stroke-opacity="0.36" stroke-width="0.7"/><line x1="0" y1="59.00" x2="205" y2="59.00" stroke="#8c8ce0" stroke-opacity="0.36" stroke-width="0.7"/><line x1="0" y1="55.00" x2="205" y2="55.00" stroke="#8c8ce0" stroke-opacity="0.36" stroke-width="0.7"/><line x1="0" y1="51.00" x2="205" y2="51.00" stroke="#8c8ce0" stroke-opacity="0.36" stroke-width="0.7"/><line x1="0" y1="47.00" x2="205" y2="47.00" stroke="#8c8ce0" stroke-opacity="0.36" stroke-width="0.7"/><line x1="0" y1="43.00" x2="205" y2="43.00" stroke="#8c8ce0" stroke-opacity="0.36" stroke-width="0.7"/><line x1="0" y1="39.00" x2="205" y2="39.00" stroke="#8c8ce0" stroke-opacity="0.36" stroke-width="0.7"/><line x1="0" y1="35.00" x2="205" y2="35.00" stroke="#8c8ce0" stroke-opacity="0.36" stroke-width="0.7"/><line x1="0" y1="31.00" x2="205" y2="31.00" stroke="#8c8ce0" stroke-opacity="0.36" stroke-width="0.7"/><line x1="0" y1="27.00" x2="205" y2="27.00" stroke="#8c8ce0" stroke-opacity="0.36" stroke-width="0.7"/><line x1="0" y1="23.00" x2="205" y2="23.00" stroke="#8c8ce0" stroke-opacity="0.36" stroke-width="0.7"/><line x1="0" y1="19.00" x2="205" y2="19.00" stroke="#8c8ce0" stroke-opacity="0.36" stroke-width="0.7"/><line x1="0" y1="15.00" x2="205" y2="15.00" stroke="#8c8ce0" stroke-opacity="0.36" stroke-width="0.7"/><line x1="0" y1="11.00" x2="205" y2="11.00" stroke="#8c8ce0" stroke-opacity="0.36" stroke-width="0.7"/><line x1="0" y1="7.00" x2="205" y2="7.00" stroke="#8c8ce0" stroke-opacity="0.36" stroke-width="0.7"/><line x1="0" y1="3.00" x2="205" y2="3.00" stroke="#8c8ce0" stroke-opacity="0.36" stroke-width="0.7"/><line x1="0" y1="115.00" x2="205" y2="115.00" stroke="#b9b0ff" stroke-opacity="0.2" stroke-width="0.7"/><line x1="0" y1="97.02" x2="205" y2="97.02" stroke="#b9b0ff" stroke-opacity="0.2" stroke-width="0.7"/><line x1="0" y1="79.04" x2="205" y2="79.04" stroke="#b9b0ff" stroke-opacity="0.2" stroke-width="0.7"/><line x1="0" y1="61.06" x2="205" y2="61.06" stroke="#b9b0ff" stroke-opacity="0.2" stroke-width="0.7"/><line x1="0" y1="43.08" x2="205" y2="43.08" stroke="#b9b0ff" stroke-opacity="0.2" stroke-width="0.7"/><line x1="0" y1="25.10" x2="205" y2="25.10" stroke="#b9b0ff" stroke-opacity="0.2" stroke-width="0.7"/><line x1="0" y1="0.00" x2="205" y2="0.00" stroke="#b9b0ff" stroke-opacity="0.2" stroke-width="0.7"/><path d="M0.00,115.00 L0.95,114.24 L1.90,113.48 L2.84,112.72 L3.79,111.96 L4.74,111.21 L5.69,110.45 L6.64,109.69 L7.58,108.93 L8.53,108.17 L9.48,107.41 L10.43,106.65 L11.38,105.90 L12.32,105.14 L13.27,104.38 L14.22,103.62 L15.17,102.86 L16.12,102.10 L17.06,101.34 L18.01,100.58 L18.96,99.83 L19.91,99.07 L20.86,98.31 L21.80,97.55 L22.75,96.79 L23.70,96.03 L24.65,95.28 L25.60,94.52 L26.54,93.76 L27.49,93.00 L28.44,92.24 L29.39,91.48 L30.34,90.73 L31.28,89.97 L32.23,89.21 L33.18,88.45 L34.13,87.69 L35.08,86.94 L36.02,86.18 L36.97,85.42 L37.92,84.66 L38.87,83.90 L39.82,83.15 L40.76,82.39 L41.71,81.63 L42.66,80.87 L43.61,80.12 L44.56,79.36 L45.50,78.60 L46.45,77.85 L47.40,77.09 L48.35,76.33 L49.30,75.58 L50.24,74.82 L51.19,74.06 L52.14,73.31 L53.09,72.55 L54.04,71.80 L54.98,71.04 L55.93,70.29 L56.88,69.53 L57.83,68.78 L58.78,68.02 L59.72,67.27 L60.67,66.51 L61.62,65.76 L62.57,65.01 L63.52,64.25 L64.46,63.50 L65.41,62.75 L66.36,62.00 L67.31,61.25 L68.26,60.49 L69.20,59.74 L70.15,58.99 L71.10,58.24 L72.05,57.50 L73.00,56.75 L73.94,56.00 L74.89,55.25 L75.84,54.51 L76.79,53.76 L77.74,53.01 L78.68,52.27 L79.63,51.53 L80.58,50.78 L81.53,50.04 L82.48,49.30 L83.43,48.56 L84.37,47.82 L85.32,47.09 L86.27,46.35 L87.22,45.62 L88.17,44.88 L89.11,44.15 L90.06,43.42 L91.01,42.69 L91.96,41.97 L92.91,41.24 L93.85,40.52 L94.80,39.80 L95.75,39.08 L96.70,38.36 L97.65,37.65 L98.59,36.94 L99.54,36.23 L100.49,35.52 L101.44,34.82 L102.39,34.12 L103.33,33.42 L104.28,32.73 L105.23,32.04 L106.18,31.35 L107.13,30.67 L108.07,30.00 L109.02,29.32 L109.97,28.66 L110.92,27.99 L111.87,27.34 L112.81,26.68 L113.76,26.04 L114.71,25.40 L115.66,24.77 L116.61,24.14 L117.55,23.52 L118.50,22.91 L119.45,22.31 L120.40,21.72 L121.35,21.13 L122.29,20.56 L123.24,20.00 L124.19,19.44 L125.14,18.90 L126.09,18.37 L127.03,17.85 L127.98,17.35 L128.93,16.86 L129.88,16.38 L130.83,15.92 L131.77,15.48 L132.72,15.05 L133.67,14.64 L134.62,14.25 L135.57,13.88 L136.51,13.54 L137.46,13.21 L138.41,12.91 L139.36,12.63 L140.31,12.38 L141.25,12.16 L142.20,11.97 L143.15,11.80 L144.10,11.67 L145.05,11.58 L145.99,11.52 L146.94,11.49 L147.89,11.51 L148.84,11.57 L149.79,11.68 L150.73,11.83 L151.68,12.03 L152.63,12.28 L153.58,12.58 L154.53,12.95 L155.47,13.37 L156.42,13.86 L157.37,14.42 L158.32,15.04 L159.27,15.74 L160.21,16.52 L161.16,17.38 L162.11,18.33 L163.06,19.37 L164.01,20.51 L164.95,21.75 L165.90,23.09 L166.85,24.55 L167.80,26.13 L168.75,27.83 L169.69,29.67 L170.64,31.64 L171.59,33.76 L172.54,36.03 L173.49,38.47 L174.43,41.07 L175.38,43.86 L176.33,46.83 L177.28,50.01 L178.23,53.39 L179.17,56.99 L180.12,60.83 L181.07,64.91 L182.02,69.25 L182.97,73.85 L183.91,78.75 L184.86,83.94 L185.81,89.45 L186.76,95.30 L187.71,101.49 L188.65,108.05 L189.60,115.00" fill="none" stroke="#e2f0ff" stroke-width="0.95" stroke-opacity="0.9"/><path d="M0.00,115.00 L0.95,114.32 L1.89,113.64 L2.84,112.96 L3.79,112.28 L4.73,111.60 L5.68,110.92 L6.63,110.24 L7.57,109.56 L8.52,108.88 L9.47,108.20 L10.41,107.52 L11.36,106.84 L12.30,106.16 L13.25,105.48 L14.20,104.80 L15.14,104.12 L16.09,103.44 L17.04,102.76 L17.98,102.08 L18.93,101.41 L19.88,100.73 L20.82,100.05 L21.77,99.37 L22.72,98.69 L23.66,98.01 L24.61,97.33 L25.56,96.65 L26.50,95.97 L27.45,95.29 L28.40,94.61 L29.34,93.93 L30.29,93.25 L31.23,92.57 L32.18,91.89 L33.13,91.21 L34.07,90.53 L35.02,89.85 L35.97,89.17 L36.91,88.50 L37.86,87.82 L38.81,87.14 L39.75,86.46 L40.70,85.78 L41.65,85.10 L42.59,84.42 L43.54,83.74 L44.49,83.06 L45.43,82.38 L46.38,81.71 L47.33,81.03 L48.27,80.35 L49.22,79.67 L50.16,78.99 L51.11,78.31 L52.06,77.64 L53.00,76.96 L53.95,76.28 L54.90,75.60 L55.84,74.92 L56.79,74.25 L57.74,73.57 L58.68,72.89 L59.63,72.21 L60.58,71.54 L61.52,70.86 L62.47,70.18 L63.42,69.51 L64.36,68.83 L65.31,68.16 L66.26,67.48 L67.20,66.81 L68.15,66.13 L69.09,65.46 L70.04,64.78 L70.99,64.11 L71.93,63.43 L72.88,62.76 L73.83,62.09 L74.77,61.41 L75.72,60.74 L76.67,60.07 L77.61,59.40 L78.56,58.73 L79.51,58.06 L80.45,57.39 L81.40,56.72 L82.35,56.05 L83.29,55.39 L84.24,54.72 L85.19,54.06 L86.13,53.39 L87.08,52.73 L88.02,52.06 L88.97,51.40 L89.92,50.74 L90.86,50.08 L91.81,49.42 L92.76,48.77 L93.70,48.11 L94.65,47.46 L95.60,46.81 L96.54,46.15 L97.49,45.51 L98.44,44.86 L99.38,44.21 L100.33,43.57 L101.28,42.93 L102.22,42.29 L103.17,41.65 L104.12,41.02 L105.06,40.39 L106.01,39.76 L106.95,39.14 L107.90,38.52 L108.85,37.90 L109.79,37.28 L110.74,36.67 L111.69,36.07 L112.63,35.46 L113.58,34.87 L114.53,34.28 L115.47,33.69 L116.42,33.11 L117.37,32.53 L118.31,31.96 L119.26,31.40 L120.21,30.84 L121.15,30.29 L122.10,29.75 L123.05,29.22 L123.99,28.69 L124.94,28.18 L125.88,27.67 L126.83,27.17 L127.78,26.69 L128.72,26.22 L129.67,25.75 L130.62,25.30 L131.56,24.87 L132.51,24.45 L133.46,24.04 L134.40,23.65 L135.35,23.28 L136.30,22.92 L137.24,22.59 L138.19,22.27 L139.14,21.97 L140.08,21.70 L141.03,21.45 L141.98,21.23 L142.92,21.03 L143.87,20.86 L144.81,20.72 L145.76,20.61 L146.71,20.53 L147.65,20.49 L148.60,20.48 L149.55,20.52 L150.49,20.59 L151.44,20.71 L152.39,20.87 L153.33,21.09 L154.28,21.35 L155.23,21.67 L156.17,22.04 L157.12,22.48 L158.07,22.98 L159.01,23.55 L159.96,24.19 L160.91,24.90 L161.85,25.70 L162.80,26.57 L163.74,27.54 L164.69,28.61 L165.64,29.77 L166.58,31.03 L167.53,32.41 L168.48,33.91 L169.42,35.53 L170.37,37.28 L171.32,39.17 L172.26,41.20 L173.21,43.40 L174.16,45.75 L175.10,48.28 L176.05,50.98 L177.00,53.88 L177.94,56.99 L178.89,60.31 L179.84,63.85 L180.78,67.64 L181.73,71.68 L182.67,75.99 L183.62,80.58 L184.57,85.46 L185.51,90.67 L186.46,96.20 L187.41,102.09 L188.35,108.35 L189.30,115.00" fill="none" stroke="#e2f0ff" stroke-width="0.95" stroke-opacity="0.9"/><path d="M0.00,115.00 L0.94,114.39 L1.89,113.78 L2.83,113.18 L3.78,112.57 L4.72,111.96 L5.67,111.35 L6.61,110.75 L7.56,110.14 L8.50,109.53 L9.45,108.92 L10.39,108.31 L11.34,107.71 L12.28,107.10 L13.23,106.49 L14.17,105.88 L15.12,105.28 L16.06,104.67 L17.01,104.06 L17.95,103.45 L18.90,102.84 L19.84,102.24 L20.79,101.63 L21.73,101.02 L22.68,100.41 L23.62,99.81 L24.57,99.20 L25.51,98.59 L26.46,97.98 L27.40,97.38 L28.35,96.77 L29.29,96.16 L30.24,95.55 L31.18,94.95 L32.13,94.34 L33.07,93.73 L34.02,93.12 L34.96,92.52 L35.91,91.91 L36.85,91.30 L37.80,90.69 L38.74,90.09 L39.69,89.48 L40.63,88.87 L41.58,88.27 L42.52,87.66 L43.47,87.05 L44.41,86.44 L45.36,85.84 L46.30,85.23 L47.25,84.62 L48.19,84.02 L49.14,83.41 L50.08,82.80 L51.03,82.20 L51.97,81.59 L52.92,80.98 L53.86,80.38 L54.81,79.77 L55.75,79.17 L56.70,78.56 L57.64,77.95 L58.59,77.35 L59.53,76.74 L60.48,76.14 L61.42,75.53 L62.37,74.93 L63.31,74.32 L64.26,73.72 L65.20,73.11 L66.15,72.51 L67.09,71.90 L68.04,71.30 L68.98,70.70 L69.93,70.09 L70.87,69.49 L71.82,68.89 L72.76,68.29 L73.71,67.68 L74.65,67.08 L75.60,66.48 L76.54,65.88 L77.49,65.28 L78.43,64.68 L79.38,64.08 L80.32,63.48 L81.27,62.88 L82.21,62.29 L83.16,61.69 L84.10,61.09 L85.05,60.50 L85.99,59.90 L86.94,59.31 L87.88,58.71 L88.83,58.12 L89.77,57.53 L90.72,56.94 L91.66,56.35 L92.61,55.76 L93.55,55.18 L94.50,54.59 L95.44,54.00 L96.39,53.42 L97.33,52.84 L98.28,52.26 L99.22,51.68 L100.17,51.11 L101.11,50.53 L102.06,49.96 L103.00,49.39 L103.95,48.82 L104.89,48.25 L105.84,47.69 L106.78,47.13 L107.73,46.57 L108.67,46.02 L109.62,45.47 L110.56,44.92 L111.51,44.37 L112.45,43.83 L113.40,43.30 L114.34,42.76 L115.29,42.24 L116.23,41.71 L117.18,41.19 L118.12,40.68 L119.07,40.18 L120.01,39.67 L120.96,39.18 L121.90,38.69 L122.85,38.21 L123.79,37.74 L124.74,37.27 L125.68,36.82 L126.63,36.37 L127.57,35.93 L128.52,35.50 L129.46,35.08 L130.41,34.68 L131.35,34.28 L132.30,33.90 L133.24,33.53 L134.19,33.18 L135.13,32.84 L136.08,32.51 L137.02,32.20 L137.97,31.91 L138.91,31.64 L139.86,31.39 L140.80,31.16 L141.75,30.95 L142.69,30.77 L143.64,30.61 L144.58,30.47 L145.53,30.36 L146.47,30.29 L147.42,30.24 L148.36,30.23 L149.31,30.25 L150.25,30.31 L151.20,30.40 L152.14,30.54 L153.09,30.72 L154.03,30.95 L154.98,31.22 L155.92,31.55 L156.87,31.93 L157.81,32.36 L158.76,32.86 L159.70,33.43 L160.65,34.06 L161.59,34.76 L162.54,35.53 L163.48,36.39 L164.43,37.33 L165.37,38.37 L166.32,39.49 L167.26,40.72 L168.21,42.05 L169.15,43.49 L170.10,45.06 L171.04,46.74 L171.99,48.56 L172.93,50.52 L173.88,52.63 L174.82,54.89 L175.77,57.32 L176.71,59.92 L177.66,62.71 L178.60,65.69 L179.55,68.87 L180.49,72.28 L181.44,75.91 L182.38,79.79 L183.33,83.92 L184.27,88.33 L185.22,93.02 L186.16,98.02 L187.11,103.33 L188.05,108.99 L189.00,115.00" fill="none" stroke="#e2f0ff" stroke-width="0.95" stroke-opacity="0.9"/><path d="M0.00,115.00 L0.94,114.47 L1.89,113.94 L2.83,113.42 L3.77,112.89 L4.72,112.36 L5.66,111.83 L6.60,111.30 L7.55,110.77 L8.49,110.25 L9.43,109.72 L10.38,109.19 L11.32,108.66 L12.27,108.13 L13.21,107.61 L14.15,107.08 L15.10,106.55 L16.04,106.02 L16.98,105.49 L17.93,104.97 L18.87,104.44 L19.81,103.91 L20.76,103.38 L21.70,102.85 L22.64,102.32 L23.59,101.80 L24.53,101.27 L25.47,100.74 L26.42,100.21 L27.36,99.68 L28.30,99.16 L29.25,98.63 L30.19,98.10 L31.13,97.57 L32.08,97.04 L33.02,96.52 L33.97,95.99 L34.91,95.46 L35.85,94.93 L36.80,94.40 L37.74,93.88 L38.68,93.35 L39.63,92.82 L40.57,92.29 L41.51,91.77 L42.46,91.24 L43.40,90.71 L44.34,90.18 L45.29,89.66 L46.23,89.13 L47.17,88.60 L48.12,88.07 L49.06,87.55 L50.00,87.02 L50.95,86.49 L51.89,85.96 L52.84,85.44 L53.78,84.91 L54.72,84.38 L55.67,83.85 L56.61,83.33 L57.55,82.80 L58.50,82.27 L59.44,81.75 L60.38,81.22 L61.33,80.69 L62.27,80.17 L63.21,79.64 L64.16,79.12 L65.10,78.59 L66.04,78.06 L66.99,77.54 L67.93,77.01 L68.87,76.49 L69.82,75.96 L70.76,75.44 L71.70,74.91 L72.65,74.39 L73.59,73.86 L74.54,73.34 L75.48,72.82 L76.42,72.29 L77.37,71.77 L78.31,71.25 L79.25,70.72 L80.20,70.20 L81.14,69.68 L82.08,69.16 L83.03,68.64 L83.97,68.12 L84.91,67.60 L85.86,67.08 L86.80,66.56 L87.74,66.04 L88.69,65.52 L89.63,65.01 L90.57,64.49 L91.52,63.98 L92.46,63.46 L93.40,62.95 L94.35,62.44 L95.29,61.92 L96.24,61.41 L97.18,60.90 L98.12,60.40 L99.07,59.89 L100.01,59.38 L100.95,58.88 L101.90,58.38 L102.84,57.87 L103.78,57.37 L104.73,56.88 L105.67,56.38 L106.61,55.89 L107.56,55.40 L108.50,54.91 L109.44,54.42 L110.39,53.94 L111.33,53.45 L112.27,52.98 L113.22,52.50 L114.16,52.03 L115.10,51.56 L116.05,51.10 L116.99,50.64 L117.94,50.18 L118.88,49.73 L119.82,49.28 L120.77,48.84 L121.71,48.40 L122.65,47.97 L123.60,47.54 L124.54,47.12 L125.48,46.71 L126.43,46.31 L127.37,45.91 L128.31,45.52 L129.26,45.14 L130.20,44.77 L131.14,44.40 L132.09,44.05 L133.03,43.71 L133.97,43.38 L134.92,43.06 L135.86,42.76 L136.81,42.47 L137.75,42.19 L138.69,41.93 L139.64,41.69 L140.58,41.46 L141.52,41.25 L142.47,41.06 L143.41,40.89 L144.35,40.75 L145.30,40.62 L146.24,40.53 L147.18,40.45 L148.13,40.41 L149.07,40.40 L150.01,40.41 L150.96,40.46 L151.90,40.55 L152.84,40.67 L153.79,40.83 L154.73,41.03 L155.67,41.28 L156.62,41.58 L157.56,41.92 L158.51,42.32 L159.45,42.77 L160.39,43.28 L161.34,43.86 L162.28,44.50 L163.22,45.22 L164.17,46.01 L165.11,46.87 L166.05,47.83 L167.00,48.87 L167.94,50.00 L168.88,51.24 L169.83,52.58 L170.77,54.04 L171.71,55.61 L172.66,57.31 L173.60,59.15 L174.54,61.13 L175.49,63.26 L176.43,65.54 L177.37,68.00 L178.32,70.63 L179.26,73.46 L180.21,76.49 L181.15,79.73 L182.09,83.19 L183.04,86.90 L183.98,90.85 L184.92,95.08 L185.87,99.59 L186.81,104.40 L187.75,109.53 L188.70,115.00" fill="none" stroke="#e2f0ff" stroke-width="0.95" stroke-opacity="0.9"/><path d="M0.00,115.00 L0.94,114.55 L1.88,114.10 L2.82,113.66 L3.76,113.21 L4.70,112.76 L5.64,112.31 L6.58,111.86 L7.52,111.42 L8.46,110.97 L9.40,110.52 L10.35,110.07 L11.29,109.62 L12.23,109.18 L13.17,108.73 L14.11,108.28 L15.05,107.83 L15.99,107.38 L16.93,106.94 L17.87,106.49 L18.81,106.04 L19.75,105.59 L20.69,105.14 L21.63,104.69 L22.57,104.25 L23.51,103.80 L24.45,103.35 L25.39,102.90 L26.33,102.45 L27.27,102.01 L28.21,101.56 L29.15,101.11 L30.09,100.66 L31.04,100.21 L31.98,99.77 L32.92,99.32 L33.86,98.87 L34.80,98.42 L35.74,97.98 L36.68,97.53 L37.62,97.08 L38.56,96.63 L39.50,96.18 L40.44,95.74 L41.38,95.29 L42.32,94.84 L43.26,94.39 L44.20,93.94 L45.14,93.50 L46.08,93.05 L47.02,92.60 L47.96,92.15 L48.90,91.71 L49.84,91.26 L50.79,90.81 L51.73,90.36 L52.67,89.92 L53.61,89.47 L54.55,89.02 L55.49,88.57 L56.43,88.13 L57.37,87.68 L58.31,87.23 L59.25,86.78 L60.19,86.34 L61.13,85.89 L62.07,85.44 L63.01,85.00 L63.95,84.55 L64.89,84.10 L65.83,83.65 L66.77,83.21 L67.71,82.76 L68.65,82.32 L69.59,81.87 L70.53,81.42 L71.48,80.98 L72.42,80.53 L73.36,80.08 L74.30,79.64 L75.24,79.19 L76.18,78.75 L77.12,78.30 L78.06,77.86 L79.00,77.41 L79.94,76.97 L80.88,76.53 L81.82,76.08 L82.76,75.64 L83.70,75.19 L84.64,74.75 L85.58,74.31 L86.52,73.87 L87.46,73.43 L88.40,72.98 L89.34,72.54 L90.28,72.10 L91.22,71.66 L92.17,71.22 L93.11,70.78 L94.05,70.35 L94.99,69.91 L95.93,69.47 L96.87,69.04 L97.81,68.60 L98.75,68.17 L99.69,67.73 L100.63,67.30 L101.57,66.87 L102.51,66.44 L103.45,66.01 L104.39,65.58 L105.33,65.15 L106.27,64.73 L107.21,64.31 L108.15,63.88 L109.09,63.46 L110.03,63.05 L110.97,62.63 L111.92,62.21 L112.86,61.80 L113.80,61.39 L114.74,60.99 L115.68,60.58 L116.62,60.18 L117.56,59.78 L118.50,59.39 L119.44,58.99 L120.38,58.61 L121.32,58.22 L122.26,57.84 L123.20,57.47 L124.14,57.10 L125.08,56.73 L126.02,56.37 L126.96,56.02 L127.90,55.67 L128.84,55.33 L129.78,54.99 L130.72,54.66 L131.66,54.34 L132.61,54.03 L133.55,53.73 L134.49,53.44 L135.43,53.16 L136.37,52.88 L137.31,52.62 L138.25,52.38 L139.19,52.14 L140.13,51.92 L141.07,51.71 L142.01,51.52 L142.95,51.35 L143.89,51.19 L144.83,51.05 L145.77,50.93 L146.71,50.84 L147.65,50.76 L148.59,50.71 L149.53,50.69 L150.47,50.69 L151.41,50.73 L152.36,50.79 L153.30,50.89 L154.24,51.02 L155.18,51.19 L156.12,51.40 L157.06,51.65 L158.00,51.94 L158.94,52.28 L159.88,52.68 L160.82,53.13 L161.76,53.63 L162.70,54.20 L163.64,54.83 L164.58,55.53 L165.52,56.30 L166.46,57.16 L167.40,58.09 L168.34,59.12 L169.28,60.23 L170.22,61.45 L171.16,62.77 L172.10,64.21 L173.05,65.77 L173.99,67.45 L174.93,69.27 L175.87,71.24 L176.81,73.36 L177.75,75.64 L178.69,78.10 L179.63,80.74 L180.57,83.57 L181.51,86.62 L182.45,89.89 L183.39,93.39 L184.33,97.14 L185.27,101.17 L186.21,105.47 L187.15,110.07 L188.09,115.00" fill="none" stroke="#e2f0ff" stroke-width="0.95" stroke-opacity="0.9"/><path d="M0.00,115.00 L0.93,114.63 L1.86,114.26 L2.79,113.90 L3.72,113.53 L4.65,113.16 L5.58,112.79 L6.51,112.43 L7.44,112.06 L8.37,111.69 L9.30,111.32 L10.23,110.96 L11.16,110.59 L12.09,110.22 L13.02,109.85 L13.95,109.48 L14.88,109.12 L15.81,108.75 L16.74,108.38 L17.67,108.01 L18.60,107.65 L19.53,107.28 L20.46,106.91 L21.39,106.54 L22.32,106.18 L23.25,105.81 L24.18,105.44 L25.11,105.07 L26.04,104.70 L26.97,104.34 L27.90,103.97 L28.83,103.60 L29.76,103.23 L30.69,102.87 L31.62,102.50 L32.55,102.13 L33.48,101.76 L34.41,101.40 L35.34,101.03 L36.27,100.66 L37.20,100.29 L38.13,99.93 L39.06,99.56 L39.99,99.19 L40.92,98.82 L41.85,98.46 L42.78,98.09 L43.71,97.72 L44.64,97.35 L45.56,96.99 L46.49,96.62 L47.42,96.25 L48.35,95.88 L49.28,95.52 L50.21,95.15 L51.14,94.78 L52.07,94.42 L53.00,94.05 L53.93,93.68 L54.86,93.31 L55.79,92.95 L56.72,92.58 L57.65,92.21 L58.58,91.85 L59.51,91.48 L60.44,91.11 L61.37,90.75 L62.30,90.38 L63.23,90.01 L64.16,89.65 L65.09,89.28 L66.02,88.91 L66.95,88.55 L67.88,88.18 L68.81,87.82 L69.74,87.45 L70.67,87.08 L71.60,86.72 L72.53,86.35 L73.46,85.99 L74.39,85.62 L75.32,85.26 L76.25,84.89 L77.18,84.53 L78.11,84.17 L79.04,83.80 L79.97,83.44 L80.90,83.07 L81.83,82.71 L82.76,82.35 L83.69,81.99 L84.62,81.62 L85.55,81.26 L86.48,80.90 L87.41,80.54 L88.34,80.18 L89.27,79.82 L90.20,79.46 L91.13,79.10 L92.06,78.74 L92.99,78.38 L93.92,78.02 L94.85,77.67 L95.78,77.31 L96.71,76.96 L97.64,76.60 L98.57,76.25 L99.50,75.89 L100.43,75.54 L101.36,75.19 L102.29,74.84 L103.22,74.49 L104.15,74.15 L105.08,73.80 L106.01,73.46 L106.94,73.11 L107.87,72.77 L108.80,72.43 L109.73,72.09 L110.66,71.76 L111.59,71.42 L112.52,71.09 L113.45,70.76 L114.38,70.44 L115.31,70.11 L116.24,69.79 L117.17,69.47 L118.10,69.15 L119.03,68.84 L119.96,68.53 L120.89,68.23 L121.82,67.93 L122.75,67.63 L123.68,67.34 L124.61,67.05 L125.54,66.77 L126.47,66.49 L127.40,66.22 L128.33,65.95 L129.26,65.69 L130.19,65.44 L131.12,65.20 L132.05,64.96 L132.98,64.73 L133.91,64.51 L134.84,64.30 L135.76,64.10 L136.69,63.91 L137.62,63.73 L138.55,63.56 L139.48,63.40 L140.41,63.26 L141.34,63.13 L142.27,63.02 L143.20,62.92 L144.13,62.84 L145.06,62.78 L145.99,62.74 L146.92,62.72 L147.85,62.71 L148.78,62.74 L149.71,62.78 L150.64,62.85 L151.57,62.95 L152.50,63.08 L153.43,63.24 L154.36,63.43 L155.29,63.66 L156.22,63.92 L157.15,64.22 L158.08,64.56 L159.01,64.95 L159.94,65.39 L160.87,65.87 L161.80,66.41 L162.73,67.00 L163.66,67.65 L164.59,68.37 L165.52,69.15 L166.45,70.00 L167.38,70.93 L168.31,71.94 L169.24,73.03 L170.17,74.21 L171.10,75.49 L172.03,76.87 L172.96,78.36 L173.89,79.96 L174.82,81.68 L175.75,83.53 L176.68,85.52 L177.61,87.65 L178.54,89.94 L179.47,92.39 L180.40,95.01 L181.33,97.81 L182.26,100.81 L183.19,104.02 L184.12,107.44 L185.05,111.10 L185.98,115.00" fill="none" stroke="#e2f0ff" stroke-width="0.95" stroke-opacity="0.9"/><path d="M0.00,115.00 L0.91,114.72 L1.82,114.43 L2.73,114.15 L3.64,113.86 L4.55,113.58 L5.46,113.30 L6.37,113.01 L7.28,112.73 L8.19,112.44 L9.10,112.16 L10.01,111.88 L10.92,111.59 L11.83,111.31 L12.74,111.02 L13.65,110.74 L14.56,110.46 L15.47,110.17 L16.38,109.89 L17.30,109.60 L18.21,109.32 L19.12,109.04 L20.03,108.75 L20.94,108.47 L21.85,108.18 L22.76,107.90 L23.67,107.62 L24.58,107.33 L25.49,107.05 L26.40,106.76 L27.31,106.48 L28.22,106.20 L29.13,105.91 L30.04,105.63 L30.95,105.34 L31.86,105.06 L32.77,104.78 L33.68,104.49 L34.59,104.21 L35.50,103.92 L36.41,103.64 L37.32,103.36 L38.23,103.07 L39.14,102.79 L40.05,102.50 L40.96,102.22 L41.87,101.94 L42.78,101.65 L43.69,101.37 L44.60,101.09 L45.51,100.80 L46.42,100.52 L47.33,100.23 L48.24,99.95 L49.15,99.67 L50.06,99.38 L50.98,99.10 L51.89,98.82 L52.80,98.53 L53.71,98.25 L54.62,97.97 L55.53,97.68 L56.44,97.40 L57.35,97.12 L58.26,96.83 L59.17,96.55 L60.08,96.27 L60.99,95.98 L61.90,95.70 L62.81,95.42 L63.72,95.14 L64.63,94.85 L65.54,94.57 L66.45,94.29 L67.36,94.01 L68.27,93.72 L69.18,93.44 L70.09,93.16 L71.00,92.88 L71.91,92.60 L72.82,92.31 L73.73,92.03 L74.64,91.75 L75.55,91.47 L76.46,91.19 L77.37,90.91 L78.28,90.63 L79.19,90.35 L80.10,90.07 L81.01,89.79 L81.92,89.51 L82.83,89.23 L83.75,88.95 L84.66,88.67 L85.57,88.40 L86.48,88.12 L87.39,87.84 L88.30,87.56 L89.21,87.29 L90.12,87.01 L91.03,86.74 L91.94,86.46 L92.85,86.19 L93.76,85.91 L94.67,85.64 L95.58,85.37 L96.49,85.10 L97.40,84.83 L98.31,84.56 L99.22,84.29 L100.13,84.02 L101.04,83.75 L101.95,83.49 L102.86,83.22 L103.77,82.96 L104.68,82.69 L105.59,82.43 L106.50,82.17 L107.41,81.92 L108.32,81.66 L109.23,81.40 L110.14,81.15 L111.05,80.90 L111.96,80.65 L112.87,80.40 L113.78,80.16 L114.69,79.92 L115.60,79.68 L116.51,79.44 L117.43,79.21 L118.34,78.98 L119.25,78.75 L120.16,78.53 L121.07,78.31 L121.98,78.09 L122.89,77.88 L123.80,77.67 L124.71,77.47 L125.62,77.27 L126.53,77.08 L127.44,76.89 L128.35,76.71 L129.26,76.53 L130.17,76.36 L131.08,76.20 L131.99,76.05 L132.90,75.90 L133.81,75.76 L134.72,75.63 L135.63,75.51 L136.54,75.41 L137.45,75.31 L138.36,75.22 L139.27,75.14 L140.18,75.08 L141.09,75.03 L142.00,74.99 L142.91,74.97 L143.82,74.97 L144.73,74.98 L145.64,75.01 L146.55,75.06 L147.46,75.13 L148.37,75.22 L149.28,75.33 L150.19,75.47 L151.11,75.63 L152.02,75.82 L152.93,76.04 L153.84,76.29 L154.75,76.57 L155.66,76.88 L156.57,77.23 L157.48,77.62 L158.39,78.04 L159.30,78.51 L160.21,79.03 L161.12,79.59 L162.03,80.20 L162.94,80.87 L163.85,81.59 L164.76,82.38 L165.67,83.23 L166.58,84.14 L167.49,85.13 L168.40,86.19 L169.31,87.33 L170.22,88.56 L171.13,89.88 L172.04,91.29 L172.95,92.81 L173.86,94.43 L174.77,96.16 L175.68,98.02 L176.59,100.00 L177.50,102.11 L178.41,104.37 L179.32,106.78 L180.23,109.35 L181.14,112.08 L182.05,115.00" fill="none" stroke="#e2f0ff" stroke-width="0.95" stroke-opacity="0.9"/><path d="M0.00,115.00 L0.86,114.81 L1.73,114.62 L2.59,114.43 L3.45,114.24 L4.32,114.05 L5.18,113.86 L6.04,113.67 L6.91,113.48 L7.77,113.29 L8.63,113.10 L9.50,112.91 L10.36,112.72 L11.23,112.53 L12.09,112.34 L12.95,112.15 L13.82,111.96 L14.68,111.77 L15.54,111.58 L16.41,111.39 L17.27,111.20 L18.13,111.01 L19.00,110.81 L19.86,110.62 L20.72,110.43 L21.59,110.24 L22.45,110.05 L23.31,109.86 L24.18,109.67 L25.04,109.48 L25.90,109.29 L26.77,109.10 L27.63,108.91 L28.49,108.72 L29.36,108.53 L30.22,108.34 L31.09,108.15 L31.95,107.96 L32.81,107.77 L33.68,107.58 L34.54,107.39 L35.40,107.20 L36.27,107.01 L37.13,106.82 L37.99,106.63 L38.86,106.44 L39.72,106.25 L40.58,106.06 L41.45,105.87 L42.31,105.68 L43.17,105.50 L44.04,105.31 L44.90,105.12 L45.76,104.93 L46.63,104.74 L47.49,104.55 L48.35,104.36 L49.22,104.17 L50.08,103.98 L50.95,103.79 L51.81,103.60 L52.67,103.41 L53.54,103.22 L54.40,103.03 L55.26,102.84 L56.13,102.66 L56.99,102.47 L57.85,102.28 L58.72,102.09 L59.58,101.90 L60.44,101.71 L61.31,101.52 L62.17,101.34 L63.03,101.15 L63.90,100.96 L64.76,100.77 L65.62,100.59 L66.49,100.40 L67.35,100.21 L68.21,100.02 L69.08,99.84 L69.94,99.65 L70.81,99.46 L71.67,99.28 L72.53,99.09 L73.40,98.91 L74.26,98.72 L75.12,98.54 L75.99,98.35 L76.85,98.17 L77.71,97.98 L78.58,97.80 L79.44,97.61 L80.30,97.43 L81.17,97.25 L82.03,97.06 L82.89,96.88 L83.76,96.70 L84.62,96.52 L85.48,96.34 L86.35,96.16 L87.21,95.98 L88.07,95.80 L88.94,95.62 L89.80,95.45 L90.66,95.27 L91.53,95.09 L92.39,94.92 L93.26,94.74 L94.12,94.57 L94.98,94.40 L95.85,94.23 L96.71,94.05 L97.57,93.89 L98.44,93.72 L99.30,93.55 L100.16,93.38 L101.03,93.22 L101.89,93.06 L102.75,92.89 L103.62,92.73 L104.48,92.58 L105.34,92.42 L106.21,92.26 L107.07,92.11 L107.93,91.96 L108.80,91.81 L109.66,91.66 L110.52,91.52 L111.39,91.38 L112.25,91.24 L113.12,91.10 L113.98,90.97 L114.84,90.84 L115.71,90.71 L116.57,90.59 L117.43,90.47 L118.30,90.35 L119.16,90.24 L120.02,90.13 L120.89,90.03 L121.75,89.93 L122.61,89.84 L123.48,89.75 L124.34,89.66 L125.20,89.59 L126.07,89.51 L126.93,89.45 L127.79,89.39 L128.66,89.34 L129.52,89.29 L130.38,89.26 L131.25,89.23 L132.11,89.21 L132.98,89.20 L133.84,89.20 L134.70,89.21 L135.57,89.23 L136.43,89.26 L137.29,89.30 L138.16,89.36 L139.02,89.42 L139.88,89.51 L140.75,89.60 L141.61,89.71 L142.47,89.84 L143.34,89.99 L144.20,90.15 L145.06,90.33 L145.93,90.53 L146.79,90.75 L147.65,90.99 L148.52,91.26 L149.38,91.54 L150.24,91.86 L151.11,92.20 L151.97,92.57 L152.84,92.97 L153.70,93.39 L154.56,93.86 L155.43,94.35 L156.29,94.88 L157.15,95.45 L158.02,96.06 L158.88,96.71 L159.74,97.41 L160.61,98.15 L161.47,98.94 L162.33,99.78 L163.20,100.68 L164.06,101.63 L164.92,102.64 L165.79,103.72 L166.65,104.86 L167.51,106.07 L168.38,107.35 L169.24,108.71 L170.10,110.15 L170.97,111.68 L171.83,113.29 L172.70,115.00" fill="none" stroke="#e2f0ff" stroke-width="0.95" stroke-opacity="0.9"/><path d="M0.00,115.00 L0.76,114.91 L1.52,114.82 L2.28,114.72 L3.04,114.63 L3.80,114.54 L4.56,114.45 L5.32,114.35 L6.08,114.26 L6.84,114.17 L7.60,114.08 L8.36,113.98 L9.12,113.89 L9.88,113.80 L10.64,113.71 L11.40,113.62 L12.16,113.52 L12.92,113.43 L13.68,113.34 L14.44,113.25 L15.20,113.15 L15.96,113.06 L16.72,112.97 L17.48,112.88 L18.24,112.79 L19.00,112.69 L19.76,112.60 L20.52,112.51 L21.28,112.42 L22.04,112.32 L22.80,112.23 L23.56,112.14 L24.32,112.05 L25.08,111.96 L25.84,111.86 L26.60,111.77 L27.36,111.68 L28.12,111.59 L28.88,111.50 L29.64,111.40 L30.40,111.31 L31.16,111.22 L31.92,111.13 L32.68,111.04 L33.44,110.94 L34.20,110.85 L34.96,110.76 L35.72,110.67 L36.48,110.58 L37.24,110.48 L38.00,110.39 L38.76,110.30 L39.52,110.21 L40.28,110.12 L41.04,110.03 L41.80,109.93 L42.56,109.84 L43.32,109.75 L44.08,109.66 L44.84,109.57 L45.60,109.48 L46.36,109.39 L47.12,109.30 L47.88,109.20 L48.64,109.11 L49.40,109.02 L50.16,108.93 L50.92,108.84 L51.68,108.75 L52.44,108.66 L53.20,108.57 L53.96,108.48 L54.73,108.39 L55.49,108.30 L56.25,108.21 L57.01,108.12 L57.77,108.03 L58.53,107.94 L59.29,107.85 L60.05,107.76 L60.81,107.67 L61.57,107.58 L62.33,107.49 L63.09,107.40 L63.85,107.31 L64.61,107.23 L65.37,107.14 L66.13,107.05 L66.89,106.96 L67.65,106.87 L68.41,106.79 L69.17,106.70 L69.93,106.61 L70.69,106.53 L71.45,106.44 L72.21,106.35 L72.97,106.27 L73.73,106.18 L74.49,106.10 L75.25,106.01 L76.01,105.93 L76.77,105.85 L77.53,105.76 L78.29,105.68 L79.05,105.60 L79.81,105.51 L80.57,105.43 L81.33,105.35 L82.09,105.27 L82.85,105.19 L83.61,105.11 L84.37,105.03 L85.13,104.96 L85.89,104.88 L86.65,104.80 L87.41,104.73 L88.17,104.65 L88.93,104.58 L89.69,104.50 L90.45,104.43 L91.21,104.36 L91.97,104.29 L92.73,104.22 L93.49,104.15 L94.25,104.09 L95.01,104.02 L95.77,103.96 L96.53,103.89 L97.29,103.83 L98.05,103.77 L98.81,103.71 L99.57,103.66 L100.33,103.60 L101.09,103.55 L101.85,103.50 L102.61,103.45 L103.37,103.40 L104.13,103.35 L104.89,103.31 L105.65,103.27 L106.41,103.23 L107.17,103.19 L107.93,103.16 L108.69,103.13 L109.45,103.10 L110.21,103.08 L110.97,103.05 L111.73,103.04 L112.49,103.02 L113.25,103.01 L114.01,103.00 L114.77,103.00 L115.53,103.00 L116.29,103.01 L117.05,103.02 L117.81,103.03 L118.57,103.05 L119.33,103.07 L120.09,103.11 L120.85,103.14 L121.61,103.18 L122.37,103.23 L123.13,103.29 L123.89,103.35 L124.65,103.42 L125.41,103.49 L126.17,103.58 L126.93,103.67 L127.69,103.77 L128.45,103.88 L129.21,104.00 L129.97,104.13 L130.73,104.27 L131.49,104.42 L132.25,104.58 L133.01,104.76 L133.77,104.94 L134.53,105.14 L135.29,105.35 L136.05,105.58 L136.81,105.82 L137.57,106.07 L138.33,106.35 L139.09,106.63 L139.85,106.94 L140.61,107.26 L141.37,107.61 L142.13,107.97 L142.89,108.36 L143.65,108.76 L144.41,109.19 L145.17,109.65 L145.93,110.12 L146.69,110.63 L147.45,111.16 L148.21,111.72 L148.97,112.31 L149.73,112.93 L150.49,113.59 L151.25,114.28 L152.01,115.00" fill="none" stroke="#e2f0ff" stroke-width="0.95" stroke-opacity="0.9"/></svg>
<div class="t n" style="left:499.40px;top:200.60px;font-size:6.60px;width:26.5px;text-align:right;color:#111;">0<i style="width:3.6px">.</i>0</div>
<div class="" style="left:527.4px;top:203.9px;width:2.6px;height:0.8px;background:#666;"></div>
<div class="t n" style="left:499.40px;top:182.62px;font-size:6.60px;width:26.5px;text-align:right;color:#111;">0<i style="width:3.6px">.</i>1</div>
<div class="" style="left:527.4px;top:185.92001250781738px;width:2.6px;height:0.8px;background:#666;"></div>
<div class="t n" style="left:499.40px;top:164.64px;font-size:6.60px;width:26.5px;text-align:right;color:#111;">0<i style="width:3.6px">.</i>2</div>
<div class="" style="left:527.4px;top:167.94002501563477px;width:2.6px;height:0.8px;background:#666;"></div>
<div class="t n" style="left:499.40px;top:146.66px;font-size:6.60px;width:26.5px;text-align:right;color:#111;">0<i style="width:3.6px">.</i>3</div>
<div class="" style="left:527.4px;top:149.96003752345214px;width:2.6px;height:0.8px;background:#666;"></div>
<div class="t n" style="left:499.40px;top:128.68px;font-size:6.60px;width:26.5px;text-align:right;color:#111;">0<i style="width:3.6px">.</i>4</div>
<div class="" style="left:527.4px;top:131.98005003126954px;width:2.6px;height:0.8px;background:#666;"></div>
<div class="t n" style="left:499.40px;top:110.70px;font-size:6.60px;width:26.5px;text-align:right;color:#111;">0<i style="width:3.6px">.</i>5</div>
<div class="" style="left:527.4px;top:114.00006253908693px;width:2.6px;height:0.8px;background:#666;"></div>
<div class="t n" style="left:499.40px;top:85.60px;font-size:6.60px;width:26.5px;text-align:right;color:#111;">0<i style="width:3.6px">.</i>6</div>
<div class="" style="left:527.4px;top:88.89999999999999px;width:2.6px;height:0.8px;background:#666;"></div>
<div class="t n" style="left:515.00px;top:207.90px;font-size:6.60px;width:30px;text-align:center;color:#111;">0<i style="width:3.6px">.</i>0</div>
<div class="" style="left:529.6px;top:204.3px;width:0.8px;height:1.8px;background:#666;"></div>
<div class="t n" style="left:545.19px;top:207.90px;font-size:6.60px;width:30px;text-align:center;color:#111;">20<i style="width:3.6px">.</i>0</div>
<div class="" style="left:559.7914580265096px;top:204.3px;width:0.8px;height:1.8px;background:#666;"></div>
<div class="t n" style="left:575.38px;top:207.90px;font-size:6.60px;width:30px;text-align:center;color:#111;">40<i style="width:3.6px">.</i>0</div>
<div class="" style="left:589.9829160530192px;top:204.3px;width:0.8px;height:1.8px;background:#666;"></div>
<div class="t n" style="left:605.57px;top:207.90px;font-size:6.60px;width:30px;text-align:center;color:#111;">60<i style="width:3.6px">.</i>0</div>
<div class="" style="left:620.1743740795288px;top:204.3px;width:0.8px;height:1.8px;background:#666;"></div>
<div class="t n" style="left:635.77px;top:207.90px;font-size:6.60px;width:30px;text-align:center;color:#111;">80<i style="width:3.6px">.</i>0</div>
<div class="" style="left:650.3658321060383px;top:204.3px;width:0.8px;height:1.8px;background:#666;"></div>
<div class="t n" style="left:665.96px;top:207.90px;font-size:6.60px;width:30px;text-align:center;color:#111;">100<i style="width:3.6px">.</i>0</div>
<div class="" style="left:680.5572901325479px;top:204.3px;width:0.8px;height:1.8px;background:#666;"></div>
<div class="t n" style="left:696.15px;top:207.90px;font-size:6.60px;width:30px;text-align:center;color:#111;">120<i style="width:3.6px">.</i>0</div>
<div class="" style="left:710.7487481590574px;top:204.3px;width:0.8px;height:1.8px;background:#666;"></div>
<div class="t n" style="left:719.40px;top:208.10px;font-size:6.10px;width:30px;text-align:center;color:#111;">135<i style="width:3.0px">.</i>8</div>
<div class="" style="left:734.6px;top:204.3px;width:0.8px;height:1.8px;background:#666;"></div>
<div class="t" style="left:617.50px;top:217.53px;font-size:6.82px;letter-spacing:-0.372px;width:30px;text-align:center;color:#111;font-weight:bold;">V(V)</div>
<div class="t" style="left:497.5px;top:143.5px;width:20px;text-align:center;font-size:6.4px;color:#111;font-weight:bold;transform:rotate(-90deg);">P(kW)</div>
<div class="" style="left:528.8px;top:203.4px;width:3px;height:1.0px;background:#e04040;"></div>
<div class="" style="left:248.5px;top:238px;width:399.5px;height:39.6px;background:#e2e2e2;border:1px solid #c4c4c4;box-shadow:inset 1px 1px 0 #f4f4f4, 1px 1px 0 #f4f4f4;box-sizing:border-box;"></div>
<div class="t" style="left:258.00px;top:246.55px;font-size:6.49px;letter-spacing:-0.354px;color:#222;font-weight:bold;">MPPT Eff.(%) V average(V)P average(kW) Energy(kWh)</div>
<div class="" style="left:258px;top:256px;width:36px;height:12px;background:#1457e6;border:1px solid #f4f8ff;box-sizing:border-box;"></div>
<div class="t" style="left:258.55px;top:258.23px;font-size:7.60px;width:36px;text-align:center;color:#fff;font-weight:bold;letter-spacing:1.1px;font-family:'Liberation Sans',sans-serif;">0.00</div>
<div class="" style="left:303px;top:256px;width:36px;height:12px;background:#1457e6;border:1px solid #f4f8ff;box-sizing:border-box;"></div>
<div class="t" style="left:303.55px;top:258.23px;font-size:7.60px;width:36px;text-align:center;color:#fff;font-weight:bold;letter-spacing:1.1px;font-family:'Liberation Sans',sans-serif;">0.00</div>
<div class="" style="left:347px;top:256px;width:36px;height:12px;background:#1457e6;border:1px solid #f4f8ff;box-sizing:border-box;"></div>
<div class="t" style="left:347.55px;top:258.23px;font-size:7.60px;width:36px;text-align:center;color:#fff;font-weight:bold;letter-spacing:1.1px;font-family:'Liberation Sans',sans-serif;">0.00</div>
<div class="" style="left:394px;top:256px;width:36px;height:12px;background:#1457e6;border:1px solid #f4f8ff;box-sizing:border-box;"></div>
<div class="t" style="left:394.55px;top:258.23px;font-size:7.60px;width:36px;text-align:center;color:#fff;font-weight:bold;letter-spacing:1.1px;font-family:'Liberation Sans',sans-serif;">0.00</div>
<div class="" style="left:523px;top:255px;width:49px;height:14px;background:#e3e3e3;border-top:1px solid #f2f2f2;border-left:1px solid #f2f2f2;box-sizing:border-box;"></div>
<div class="" style="left:570px;top:256px;width:1px;height:12px;background:#a4a4a4;"></div>
<div class="" style="left:524px;top:267px;width:46px;height:1px;background:#a4a4a4;"></div>
<div class="" style="left:571px;top:255px;width:1px;height:14px;background:#6c6c6c;"></div>
<div class="" style="left:523px;top:268px;width:49px;height:1px;background:#6c6c6c;"></div>
<div class="" style="left:525px;top:257px;width:44px;height:9px;border:1px dotted #c6c6c6;box-sizing:border-box;"></div>
<div class="t" style="left:523.00px;top:257.85px;font-size:6.38px;letter-spacing:-0.348px;width:48px;text-align:center;color:#8e8e8e;">MPP Test ON</div>
<div class="" style="left:248.5px;top:293px;width:399.5px;height:130px;background:#e6e6e6;border-top:1px solid #f8f8f8;border-left:1px solid #f8f8f8;border-right:1.5px solid #8a8a8a;border-bottom:1.5px solid #8a8a8a;box-sizing:border-box;"></div>
<div class="" style="left:250px;top:281px;width:51.8px;height:13px;background:#e6e6e6;border-top:1px solid #e9dcc8;border-left:1px solid #f4f4f4;border-right:1px solid #9a9a9a;box-sizing:border-box;"></div>
<div class="t" style="left:248.20px;top:283.65px;font-size:6.49px;letter-spacing:-0.354px;width:51.8px;text-align:center;color:#222;font-weight:bold;">User Define</div>
<div class="" style="left:302.8px;top:283px;width:29.6px;height:10.6px;background:linear-gradient(#dcdcdc,#cfcfcf);border-right:1px solid #8f8f8f;box-sizing:border-box;"></div>
<div class="t" style="left:301.00px;top:284.65px;font-size:6.38px;letter-spacing:-0.348px;width:29.6px;text-align:center;color:#333;">Sandia</div>
<div class="" style="left:334.4px;top:283px;width:77.3px;height:10.6px;background:linear-gradient(#dcdcdc,#cfcfcf);border-right:1px solid #8f8f8f;box-sizing:border-box;"></div>
<div class="t" style="left:333.40px;top:284.65px;font-size:6.38px;letter-spacing:-0.348px;width:77.3px;text-align:center;color:#3a3a3a;">EN50530 &amp; CGC/GT004</div>
<div class="" style="left:261px;top:317px;width:5px;height:10px;background:linear-gradient(90deg,#f0f0e8,#e4e4d6 65%,#b4b8a4);border-radius:1px;"></div>
<svg style="position:absolute;left:261px;top:317px" width="5" height="10" viewBox="0 0 5 10"><path d="M0.5 3.0 L2.4 0.7 L4.3 3.0 Z M0.5 6.5 L2.4 8.8 L4.3 6.5 Z" fill="#111"/></svg>
<div class="" style="left:267px;top:316px;width:37px;height:12px;background:#fcfcfc;border-top:1px solid #d0d0d0;border-left:1px solid #d8d8d8;border-right:1px solid #f8f8f8;border-bottom:1px solid #f8f8f8;box-sizing:border-box;"></div>
<div class="t" style="left:267.00px;top:318.94px;font-size:6.60px;letter-spacing:-0.360px;width:36.5px;text-align:center;color:#3a3a3a;">Sandia</div>
<div class="" style="left:315px;top:317px;width:5px;height:10px;background:linear-gradient(90deg,#f0f0e8,#e4e4d6 65%,#b4b8a4);border-radius:1px;"></div>
<svg style="position:absolute;left:315px;top:317px" width="5" height="10" viewBox="0 0 5 10"><path d="M0.5 3.0 L2.4 0.7 L4.3 3.0 Z M0.5 6.5 L2.4 8.8 L4.3 6.5 Z" fill="#111"/></svg>
<div class="" style="left:321px;top:316px;width:37px;height:12px;background:#fcfcfc;border-top:1px solid #d0d0d0;border-left:1px solid #d8d8d8;border-right:1px solid #f8f8f8;border-bottom:1px solid #f8f8f8;box-sizing:border-box;"></div>
<div class="t n" style="left:321.00px;top:318.30px;font-size:6.40px;width:36.5px;text-align:center;color:#3a3a3a;">100</div>
<div class="" style="left:371px;top:317px;width:5px;height:10px;background:linear-gradient(90deg,#f0f0e8,#e4e4d6 65%,#b4b8a4);border-radius:1px;"></div>
<svg style="position:absolute;left:371px;top:317px" width="5" height="10" viewBox="0 0 5 10"><path d="M0.5 3.0 L2.4 0.7 L4.3 3.0 Z M0.5 6.5 L2.4 8.8 L4.3 6.5 Z" fill="#111"/></svg>
<div class="" style="left:377px;top:316px;width:37px;height:12px;background:#fcfcfc;border-top:1px solid #d0d0d0;border-left:1px solid #d8d8d8;border-right:1px solid #f8f8f8;border-bottom:1px solid #f8f8f8;box-sizing:border-box;"></div>
<div class="t n" style="left:377.00px;top:318.30px;font-size:6.40px;width:36.5px;text-align:center;color:#3a3a3a;">1000</div>
<div class="" style="left:425px;top:317px;width:5px;height:10px;background:linear-gradient(90deg,#f0f0e8,#e4e4d6 65%,#b4b8a4);border-radius:1px;"></div>
<svg style="position:absolute;left:425px;top:317px" width="5" height="10" viewBox="0 0 5 10"><path d="M0.5 3.0 L2.4 0.7 L4.3 3.0 Z M0.5 6.5 L2.4 8.8 L4.3 6.5 Z" fill="#111"/></svg>
<div class="" style="left:431px;top:316px;width:37px;height:12px;background:#fcfcfc;border-top:1px solid #d0d0d0;border-left:1px solid #d8d8d8;border-right:1px solid #f8f8f8;border-bottom:1px solid #f8f8f8;box-sizing:border-box;"></div>
<div class="t n" style="left:431.00px;top:318.30px;font-size:6.40px;width:36.5px;text-align:center;color:#3a3a3a;">5</div>
<div class="" style="left:479px;top:317px;width:5px;height:10px;background:linear-gradient(90deg,#f0f0e8,#e4e4d6 65%,#b4b8a4);border-radius:1px;"></div>
<svg style="position:absolute;left:479px;top:317px" width="5" height="10" viewBox="0 0 5 10"><path d="M0.5 3.0 L2.4 0.7 L4.3 3.0 Z M0.5 6.5 L2.4 8.8 L4.3 6.5 Z" fill="#111"/></svg>
<div class="" style="left:485px;top:316px;width:37px;height:12px;background:#fcfcfc;border-top:1px solid #d0d0d0;border-left:1px solid #d8d8d8;border-right:1px solid #f8f8f8;border-bottom:1px solid #f8f8f8;box-sizing:border-box;"></div>
<div class="t n" style="left:485.00px;top:318.30px;font-size:6.40px;width:36.5px;text-align:center;color:#3a3a3a;">60</div>
<div class="" style="left:261px;top:355px;width:5px;height:10px;background:linear-gradient(90deg,#f0f0e8,#e4e4d6 65%,#b4b8a4);border-radius:1px;"></div>
<svg style="position:absolute;left:261px;top:355px" width="5" height="10" viewBox="0 0 5 10"><path d="M0.5 3.0 L2.4 0.7 L4.3 3.0 Z M0.5 6.5 L2.4 8.8 L4.3 6.5 Z" fill="#111"/></svg>
<div class="" style="left:267px;top:354px;width:37px;height:12px;background:#fcfcfc;border-top:1px solid #d0d0d0;border-left:1px solid #d8d8d8;border-right:1px solid #f8f8f8;border-bottom:1px solid #f8f8f8;box-sizing:border-box;"></div>
<div class="t n" style="left:267.00px;top:356.30px;font-size:6.40px;width:36.5px;text-align:center;color:#3a3a3a;">300</div>
<div class="" style="left:315px;top:355px;width:5px;height:10px;background:linear-gradient(90deg,#f0f0e8,#e4e4d6 65%,#b4b8a4);border-radius:1px;"></div>
<svg style="position:absolute;left:315px;top:355px" width="5" height="10" viewBox="0 0 5 10"><path d="M0.5 3.0 L2.4 0.7 L4.3 3.0 Z M0.5 6.5 L2.4 8.8 L4.3 6.5 Z" fill="#111"/></svg>
<div class="" style="left:321px;top:354px;width:37px;height:12px;background:#fcfcfc;border-top:1px solid #d0d0d0;border-left:1px solid #d8d8d8;border-right:1px solid #f8f8f8;border-bottom:1px solid #f8f8f8;box-sizing:border-box;"></div>
<div class="t n" style="left:321.00px;top:356.30px;font-size:6.40px;width:36.5px;text-align:center;color:#3a3a3a;">800<i style="width:3.6px">.</i>0</div>
<div class="" style="left:371px;top:355px;width:5px;height:10px;background:linear-gradient(90deg,#f0f0e8,#e4e4d6 65%,#b4b8a4);border-radius:1px;"></div>
<svg style="position:absolute;left:371px;top:355px" width="5" height="10" viewBox="0 0 5 10"><path d="M0.5 3.0 L2.4 0.7 L4.3 3.0 Z M0.5 6.5 L2.4 8.8 L4.3 6.5 Z" fill="#111"/></svg>
<div class="" style="left:377px;top:354px;width:37px;height:12px;background:#fcfcfc;border-top:1px solid #d0d0d0;border-left:1px solid #d8d8d8;border-right:1px solid #f8f8f8;border-bottom:1px solid #f8f8f8;box-sizing:border-box;"></div>
<div class="t n" style="left:377.00px;top:356.30px;font-size:6.40px;width:36.5px;text-align:center;color:#3a3a3a;">10<i style="width:3.6px">.</i>0</div>
<div class="" style="left:425px;top:355px;width:5px;height:10px;background:linear-gradient(90deg,#f0f0e8,#e4e4d6 65%,#b4b8a4);border-radius:1px;"></div>
<svg style="position:absolute;left:425px;top:355px" width="5" height="10" viewBox="0 0 5 10"><path d="M0.5 3.0 L2.4 0.7 L4.3 3.0 Z M0.5 6.5 L2.4 8.8 L4.3 6.5 Z" fill="#111"/></svg>
<div class="" style="left:431px;top:354px;width:37px;height:12px;background:#fcfcfc;border-top:1px solid #d0d0d0;border-left:1px solid #d8d8d8;border-right:1px solid #f8f8f8;border-bottom:1px solid #f8f8f8;box-sizing:border-box;"></div>
<div class="t n" style="left:431.00px;top:356.30px;font-size:6.40px;width:36.5px;text-align:center;color:#3a3a3a;">800<i style="width:3.6px">.</i>0</div>
<div class="" style="left:479px;top:355px;width:5px;height:10px;background:linear-gradient(90deg,#f0f0e8,#e4e4d6 65%,#b4b8a4);border-radius:1px;"></div>
<svg style="position:absolute;left:479px;top:355px" width="5" height="10" viewBox="0 0 5 10"><path d="M0.5 3.0 L2.4 0.7 L4.3 3.0 Z M0.5 6.5 L2.4 8.8 L4.3 6.5 Z" fill="#111"/></svg>
<div class="" style="left:485px;top:354px;width:37px;height:12px;background:#fcfcfc;border-top:1px solid #d0d0d0;border-left:1px solid #d8d8d8;border-right:1px solid #f8f8f8;border-bottom:1px solid #f8f8f8;box-sizing:border-box;"></div>
<div class="t n" style="left:485.00px;top:356.30px;font-size:6.40px;width:36.5px;text-align:center;color:#3a3a3a;">10<i style="width:3.6px">.</i>0</div>
<div class="" style="left:261px;top:393px;width:5px;height:10px;background:linear-gradient(90deg,#f0f0e8,#e4e4d6 65%,#b4b8a4);border-radius:1px;"></div>
<svg style="position:absolute;left:261px;top:393px" width="5" height="10" viewBox="0 0 5 10"><path d="M0.5 3.0 L2.4 0.7 L4.3 3.0 Z M0.5 6.5 L2.4 8.8 L4.3 6.5 Z" fill="#111"/></svg>
<div class="" style="left:267px;top:392px;width:37px;height:12px;background:#fcfcfc;border-top:1px solid #d0d0d0;border-left:1px solid #d8d8d8;border-right:1px solid #f8f8f8;border-bottom:1px solid #f8f8f8;box-sizing:border-box;"></div>
<div class="t n" style="left:267.00px;top:394.30px;font-size:6.40px;width:36.5px;text-align:center;color:#3a3a3a;">100<i style="width:3.6px">.</i>0</div>
<div class="" style="left:315px;top:393px;width:5px;height:10px;background:linear-gradient(90deg,#f0f0e8,#e4e4d6 65%,#b4b8a4);border-radius:1px;"></div>
<svg style="position:absolute;left:315px;top:393px" width="5" height="10" viewBox="0 0 5 10"><path d="M0.5 3.0 L2.4 0.7 L4.3 3.0 Z M0.5 6.5 L2.4 8.8 L4.3 6.5 Z" fill="#111"/></svg>
<div class="" style="left:321px;top:392px;width:37px;height:12px;background:#fcfcfc;border-top:1px solid #d0d0d0;border-left:1px solid #d8d8d8;border-right:1px solid #f8f8f8;border-bottom:1px solid #f8f8f8;box-sizing:border-box;"></div>
<div class="t n" style="left:321.00px;top:394.30px;font-size:6.40px;width:36.5px;text-align:center;color:#3a3a3a;">0<i style="width:3.6px">.</i>600</div>
<div class="" style="left:371px;top:393px;width:5px;height:10px;background:linear-gradient(90deg,#f0f0e8,#e4e4d6 65%,#b4b8a4);border-radius:1px;"></div>
<svg style="position:absolute;left:371px;top:393px" width="5" height="10" viewBox="0 0 5 10"><path d="M0.5 3.0 L2.4 0.7 L4.3 3.0 Z M0.5 6.5 L2.4 8.8 L4.3 6.5 Z" fill="#111"/></svg>
<div class="" style="left:377px;top:392px;width:37px;height:12px;background:#fcfcfc;border-top:1px solid #d0d0d0;border-left:1px solid #d8d8d8;border-right:1px solid #f8f8f8;border-bottom:1px solid #f8f8f8;box-sizing:border-box;"></div>
<div class="t n" style="left:377.00px;top:394.30px;font-size:6.40px;width:36.5px;text-align:center;color:#3a3a3a;">0<i style="width:3.6px">.</i>68</div>
<div class="" style="left:425px;top:393px;width:5px;height:10px;background:linear-gradient(90deg,#f0f0e8,#e4e4d6 65%,#b4b8a4);border-radius:1px;"></div>
<svg style="position:absolute;left:425px;top:393px" width="5" height="10" viewBox="0 0 5 10"><path d="M0.5 3.0 L2.4 0.7 L4.3 3.0 Z M0.5 6.5 L2.4 8.8 L4.3 6.5 Z" fill="#111"/></svg>
<div class="" style="left:431px;top:392px;width:37px;height:12px;background:#fcfcfc;border-top:1px solid #d0d0d0;border-left:1px solid #d8d8d8;border-right:1px solid #f8f8f8;border-bottom:1px solid #f8f8f8;box-sizing:border-box;"></div>
<div class="t n" style="left:431.00px;top:394.30px;font-size:6.40px;width:36.5px;text-align:center;color:#3a3a3a;">1</div>
<div class="t" style="left:266.30px;top:306.65px;font-size:6.49px;letter-spacing:-0.354px;color:#1c1c1c;-webkit-text-stroke:0.3px #1c1c1c;width:36.5px;text-align:center;">I-V Model</div>
<div class="t" style="left:321.00px;top:306.65px;font-size:6.49px;letter-spacing:-0.354px;color:#1c1c1c;-webkit-text-stroke:0.3px #1c1c1c;width:36.5px;text-align:center;">IrrL(W/m2)</div>
<div class="t" style="left:375.50px;top:306.65px;font-size:6.49px;letter-spacing:-0.354px;color:#1c1c1c;-webkit-text-stroke:0.3px #1c1c1c;width:36.5px;text-align:center;">IrrH(W/m2)</div>
<div class="t" style="left:432.00px;top:306.85px;font-size:6.49px;letter-spacing:-0.354px;color:#1c1c1c;-webkit-text-stroke:0.3px #1c1c1c;">TempL</div>
<div class="t" style="left:486.00px;top:306.85px;font-size:6.49px;letter-spacing:-0.354px;color:#1c1c1c;-webkit-text-stroke:0.3px #1c1c1c;">TempH</div>
<div class="t" style="left:256.00px;top:344.15px;font-size:6.49px;letter-spacing:-0.354px;color:#1c1c1c;-webkit-text-stroke:0.3px #1c1c1c;">Initial Setup Time</div>
<div class="t" style="left:321.50px;top:344.15px;font-size:6.49px;letter-spacing:-0.354px;color:#1c1c1c;-webkit-text-stroke:0.3px #1c1c1c;">T raise(s)</div>
<div class="t" style="left:377.00px;top:344.15px;font-size:6.49px;letter-spacing:-0.354px;color:#1c1c1c;-webkit-text-stroke:0.3px #1c1c1c;">T high(s)</div>
<div class="t" style="left:432.00px;top:344.15px;font-size:6.49px;letter-spacing:-0.354px;color:#1c1c1c;-webkit-text-stroke:0.3px #1c1c1c;">T fall(s)</div>
<div class="t" style="left:486.00px;top:344.15px;font-size:6.49px;letter-spacing:-0.354px;color:#1c1c1c;-webkit-text-stroke:0.3px #1c1c1c;">T low(s)</div>
<div class="t" style="left:267.00px;top:382.15px;font-size:6.49px;letter-spacing:-0.354px;color:#1c1c1c;-webkit-text-stroke:0.3px #1c1c1c;">Vmp</div>
<div class="t" style="left:322.00px;top:382.15px;font-size:6.49px;letter-spacing:-0.354px;color:#1c1c1c;-webkit-text-stroke:0.3px #1c1c1c;">Pmax(kW)</div>
<div class="t" style="left:377.00px;top:382.15px;font-size:6.49px;letter-spacing:-0.354px;color:#1c1c1c;-webkit-text-stroke:0.3px #1c1c1c;">FF</div>
<div class="t" style="left:432.00px;top:382.15px;font-size:6.49px;letter-spacing:-0.354px;color:#1c1c1c;-webkit-text-stroke:0.3px #1c1c1c;">Repetitions</div>
<div class="" style="left:533px;top:389px;width:44px;height:17px;background:#f6f6f6;border-top:1px solid #fff;border-left:1px solid #fff;box-sizing:border-box;"></div>
<div class="" style="left:574px;top:390px;width:1px;height:14px;background:#dcdcdc;"></div>
<div class="" style="left:534px;top:403px;width:41px;height:1px;background:#dcdcdc;"></div>
<div class="" style="left:575px;top:390px;width:1px;height:15px;background:#909090;"></div>
<div class="" style="left:534px;top:404px;width:42px;height:1px;background:#909090;"></div>
<div class="" style="left:576px;top:390px;width:1px;height:16px;background:#5a5a5a;"></div>
<div class="" style="left:534px;top:405px;width:43px;height:1px;background:#5a5a5a;"></div>
<div class="t" style="left:533.00px;top:393.88px;font-size:7.48px;letter-spacing:-0.408px;width:42px;text-align:center;color:#1a1a1a;-webkit-text-stroke:0.2px #1a1a1a;">Initiate</div>
<div class="t" style="left:595.00px;top:334.59px;font-size:7.48px;letter-spacing:-0.408px;width:47px;text-align:center;color:#222;font-weight:bold;">File name</div>
<div class="" style="left:595px;top:346px;width:47px;height:12px;background:#f0f0f0;border:1px solid #929292;border-right-color:#f6f6f6;border-bottom-color:#f6f6f6;box-shadow:inset 1px 1px 0 #c4c4c4;box-sizing:border-box;"></div>
<div class="" style="left:595px;top:366px;width:48px;height:16px;background:#f6f6f6;border-top:1px solid #fff;border-left:1px solid #fff;box-sizing:border-box;"></div>
<div class="" style="left:640px;top:367px;width:1px;height:13px;background:#dcdcdc;"></div>
<div class="" style="left:596px;top:379px;width:45px;height:1px;background:#dcdcdc;"></div>
<div class="" style="left:641px;top:367px;width:1px;height:14px;background:#909090;"></div>
<div class="" style="left:596px;top:380px;width:46px;height:1px;background:#909090;"></div>
<div class="" style="left:642px;top:367px;width:1px;height:15px;background:#606060;"></div>
<div class="" style="left:596px;top:381px;width:47px;height:1px;background:#606060;"></div>
<div class="t" style="left:595.00px;top:371.02px;font-size:6.38px;letter-spacing:-0.348px;width:46px;text-align:center;color:#2a2a2a;-webkit-text-stroke:0.05px #2a2a2a;">Save as...</div>
<div class="" style="left:595px;top:390px;width:48px;height:16px;background:#f6f6f6;border-top:1px solid #fff;border-left:1px solid #fff;box-sizing:border-box;"></div>
<div class="" style="left:640px;top:391px;width:1px;height:13px;background:#dcdcdc;"></div>
<div class="" style="left:596px;top:403px;width:45px;height:1px;background:#dcdcdc;"></div>
<div class="" style="left:641px;top:391px;width:1px;height:14px;background:#909090;"></div>
<div class="" style="left:596px;top:404px;width:46px;height:1px;background:#909090;"></div>
<div class="" style="left:642px;top:391px;width:1px;height:15px;background:#606060;"></div>
<div class="" style="left:596px;top:405px;width:47px;height:1px;background:#606060;"></div>
<div class="t" style="left:595.00px;top:395.02px;font-size:6.38px;letter-spacing:-0.348px;width:46px;text-align:center;color:#2a2a2a;-webkit-text-stroke:0.05px #2a2a2a;">open...</div>
<div class="" style="left:654px;top:238px;width:98px;height:184px;background:#e2e2e2;border:1px solid #c4c4c4;box-shadow:inset 1px 1px 0 #f4f4f4, 1px 1px 0 #f4f4f4;box-sizing:border-box;"></div>
<div class="t" style="left:651.00px;top:252.19px;font-size:7.43px;letter-spacing:-0.405px;color:#1c1c1c;-webkit-text-stroke:0.3px #1c1c1c;width:40.3px;text-align:right;">Vmea(V)</div>
<div class="t" style="left:651.00px;top:275.80px;font-size:7.43px;letter-spacing:-0.405px;color:#1c1c1c;-webkit-text-stroke:0.3px #1c1c1c;width:40.3px;text-align:right;">Imea(A)</div>
<div class="t" style="left:651.00px;top:299.60px;font-size:7.43px;letter-spacing:-0.405px;color:#1c1c1c;-webkit-text-stroke:0.3px #1c1c1c;width:40.3px;text-align:right;">Pmea(kW)</div>
<div class="" style="left:691.7px;top:248.3px;width:51.6px;height:16.7px;background:#1457e6;border:1px solid #eef4ff;box-sizing:border-box;"></div>
<div class="t" style="left:692.3000000000001px;top:250.0px;width:51.6px;text-align:center;font-family:'Liberation Serif',serif;font-weight:bold;font-size:11.6px;letter-spacing:0.65px;color:#ecf6ff;">0<i style="display:inline-block;font-style:normal;width:6.4px;text-align:left">.</i>00</div>
<div class="" style="left:691.7px;top:272.3px;width:51.6px;height:16.7px;background:#1457e6;border:1px solid #eef4ff;box-sizing:border-box;"></div>
<div class="t" style="left:692.3000000000001px;top:274.0px;width:51.6px;text-align:center;font-family:'Liberation Serif',serif;font-weight:bold;font-size:11.6px;letter-spacing:0.65px;color:#ecf6ff;">0<i style="display:inline-block;font-style:normal;width:6.4px;text-align:left">.</i>00</div>
<div class="" style="left:691.7px;top:296.2px;width:51.6px;height:16.7px;background:#1457e6;border:1px solid #eef4ff;box-sizing:border-box;"></div>
<div class="t" style="left:692.3000000000001px;top:297.9px;width:51.6px;text-align:center;font-family:'Liberation Serif',serif;font-weight:bold;font-size:11.6px;letter-spacing:0.65px;color:#ecf6ff;">0<i style="display:inline-block;font-style:normal;width:6.4px;text-align:left">.</i>000</div>
<div class="t" style="left:678.30px;top:324.89px;font-size:7.48px;letter-spacing:-0.408px;color:#1c1c1c;-webkit-text-stroke:0.3px #1c1c1c;">Total Time:</div>
<div class="" style="left:677px;top:334.4px;width:51.5px;height:13.2px;background:#4a4a48;border:1px solid #2c2c2c;box-sizing:border-box;"></div>
<div class="t" style="left:677.50px;top:336.60px;font-size:10.00px;width:51.5px;text-align:center;color:#f2d468;font-weight:bold;letter-spacing:1.1px;font-family:'Liberation Sans',sans-serif;">00:32:00</div>
<div class="t" style="left:678.00px;top:356.19px;font-size:7.48px;letter-spacing:-0.408px;color:#1c1c1c;-webkit-text-stroke:0.3px #1c1c1c;">Testing</div>
<div class="t" style="left:678.00px;top:367.19px;font-size:7.48px;letter-spacing:-0.408px;color:#1c1c1c;-webkit-text-stroke:0.3px #1c1c1c;">Elapsed Time:</div>
<div class="" style="left:677px;top:376.8px;width:51.5px;height:13.6px;background:#4a4a48;border:1px solid #2c2c2c;box-sizing:border-box;"></div>
<div class="t" style="left:677.50px;top:379.00px;font-size:10.00px;width:51.5px;text-align:center;color:#f2d468;font-weight:bold;letter-spacing:1.1px;font-family:'Liberation Sans',sans-serif;">00:00:00</div>
<div class="" style="left:659.3px;top:400.8px;width:24.4px;height:12.9px;background:#1457e6;border:1px solid #f4f8ff;box-sizing:border-box;"></div>
<div class="t" style="left:659.65px;top:403.25px;font-size:8.00px;width:24.4px;text-align:center;color:#fff;font-weight:bold;letter-spacing:0.7px;font-family:'Liberation Sans',sans-serif;">0<i style="width:4.6px">.</i>0</div>
<div class="t" style="left:685.80px;top:403.16px;font-size:8.14px;letter-spacing:-0.444px;color:#222;font-weight:bold;">%</div>
<div class="" style="left:693.1px;top:405.2px;width:54.6px;height:7.3px;background:#6c6a8e;border-radius:4px;"></div>
<div class="" style="left:693.1px;top:405.2px;width:4px;height:7.3px;background:#1a40e0;border-radius:4px 0 0 4px;"></div>
</div></body></html>
